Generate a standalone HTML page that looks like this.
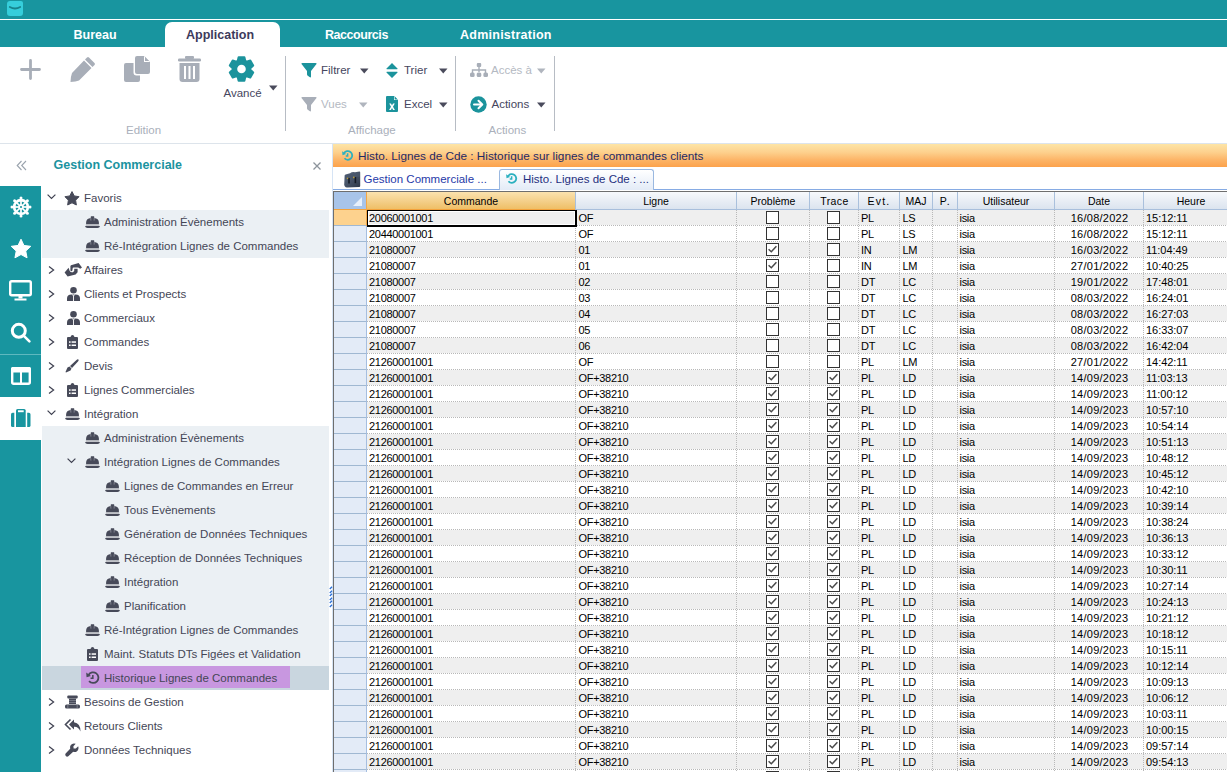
<!DOCTYPE html>
<html><head><meta charset="utf-8"><title>Histo</title>
<style>
html,body{margin:0;padding:0;}
body{width:1227px;height:772px;overflow:hidden;position:relative;background:#fff;font-family:"Liberation Sans",sans-serif;}
.t{position:absolute;white-space:nowrap;line-height:1;}
svg{overflow:visible}
</style></head><body>

<div style="position:absolute;left:0px;top:0px;width:1227px;height:47px;background:#18959f"></div>
<div style="position:absolute;left:0px;top:19px;width:1227px;height:1px;background:#ffffff"></div>
<div style="position:absolute;left:6.5px;top:0.5px;width:16px;height:15.5px;background:#36cedb;border-radius:3px 2px 3px 3px"></div>
<svg style="position:absolute;left:6.5px;top:0px" width="16" height="16" viewBox="0 0 16 16"><path d="M2.8 7 Q8 10 13.2 7" stroke="#17838c" stroke-width="1.8" fill="none" stroke-linecap="round"/></svg>
<div style="position:absolute;left:165px;top:22px;width:115px;height:25px;background:#fff;border-radius:7px 7px 0 0"></div>
<div class="t" style="left:73.5px;top:29.42px;font-size:12.5px;color:#ffffff;font-weight:bold;">Bureau</div>
<div class="t" style="left:186.0px;top:29.42px;font-size:12.5px;color:#3d3a5c;font-weight:bold;">Application</div>
<div class="t" style="left:325.0px;top:29.42px;font-size:12.5px;color:#ffffff;font-weight:bold;letter-spacing:-0.45px">Raccourcis</div>
<div class="t" style="left:460.0px;top:29.42px;font-size:12.5px;color:#ffffff;font-weight:bold;letter-spacing:0.25px">Administration</div>
<div style="position:absolute;left:0px;top:143px;width:1227px;height:1px;background:#dde4eb"></div>
<svg style="position:absolute;left:20px;top:59px" width="21" height="21" viewBox="0 0 21 21"><path d="M10.5 1.5V19.5M1.5 10.5H19.5" stroke="#a8aeb8" stroke-width="2.8" stroke-linecap="round"/></svg>
<svg style="position:absolute;left:70px;top:56px" width="26" height="26" viewBox="0 0 26 26"><path d="M19 1.5 L24.5 7 Q25.5 8 24.5 9 L22.5 11 L15 3.5 L17 1.5 Q18 0.5 19 1.5Z M14 4.5 L21.5 12 L9 24.5 Q6 25.8 0.5 26 Q0.8 20 2 17 Z" fill="#a8aeb8"/></svg>
<svg style="position:absolute;left:124px;top:56px" width="26" height="26" viewBox="0 0 26 26"><path d="M11 2 Q11 0 13 0 L20 0 L26 6 L26 16 Q26 18 24 18 L13 18 Q11 18 11 16Z" fill="#a8aeb8"/><path d="M20 0 L20 6 L26 6Z" fill="#fff"/><path d="M21 0.8 L25.2 5 L21 5Z" fill="#a8aeb8"/><path d="M2 7 L9.5 7 L9.5 16.5 Q9.5 19.5 12.5 19.5 L16 19.5 L16 24 Q16 26 14 26 L2 26 Q0 26 0 24 L0 9 Q0 7 2 7Z" fill="#a8aeb8"/></svg>
<svg style="position:absolute;left:178px;top:56px" width="23" height="26" viewBox="0 0 23 26"><rect x="0" y="2.5" width="23" height="3" rx="1.2" fill="#a8aeb8"/><rect x="7" y="0" width="9" height="3" rx="1" fill="#a8aeb8"/><path d="M1.5 7 L21.5 7 L21.5 23 Q21.5 26 18.5 26 L4.5 26 Q1.5 26 1.5 23Z" fill="#a8aeb8"/><rect x="6" y="10" width="2" height="13" fill="#fff"/><rect x="10.5" y="10" width="2" height="13" fill="#fff"/><rect x="15" y="10" width="2" height="13" fill="#fff"/></svg>
<svg style="position:absolute;left:229px;top:56px" width="26" height="26" viewBox="0 0 26 26"><path d="M8.71 4.95 L9.60 1.15 L15.40 1.15 L16.29 4.95 L17.58 5.69 L21.31 4.56 L24.21 9.59 L21.37 12.26 L21.37 13.74 L24.21 16.41 L21.31 21.44 L17.58 20.31 L16.29 21.05 L15.40 24.85 L9.60 24.85 L8.71 21.05 L7.42 20.31 L3.69 21.44 L0.79 16.41 L3.63 13.74 L3.63 12.26 L0.79 9.59 L3.69 4.56 L7.42 5.69Z" fill="#1b939c" stroke="#1b939c" stroke-width="2" stroke-linejoin="round"/><circle cx="12.5" cy="13" r="4.3" fill="#fff"/></svg>
<div class="t" style="left:223.5px;top:87.77px;font-size:11.5px;color:#46465e;font-weight:normal;">Avancé</div>
<svg style="position:absolute;left:269px;top:85px" width="9" height="6" viewBox="0 0 9 6"><path d="M0 0.5 L8.5 0.5 L4.25 5.5Z" fill="#4a4b5c"/></svg>
<div class="t" style="left:126.0px;top:125.27px;font-size:11.5px;color:#aab0bb;font-weight:normal;">Edition</div>
<div style="position:absolute;left:285px;top:56px;width:1px;height:75px;background:#b7bcc4"></div>
<div style="position:absolute;left:455px;top:56px;width:1px;height:75px;background:#b7bcc4"></div>
<div style="position:absolute;left:554px;top:56px;width:1px;height:75px;background:#b7bcc4"></div>
<svg style="position:absolute;left:301px;top:63px" width="16" height="15" viewBox="0 0 16 15"><path d="M0.5 1 Q0 0 1.5 0 L14.5 0 Q16 0 15.5 1 L10 8 L10 13.5 Q10 15 8.5 14 L6.5 12.5 Q6 12 6 11 L6 8Z" fill="#1b939c"/></svg>
<div class="t" style="left:321.0px;top:64.77px;font-size:11.5px;color:#46465e;font-weight:normal;">Filtrer</div>
<svg style="position:absolute;left:360px;top:68px" width="9" height="6" viewBox="0 0 9 6"><path d="M0 0.5 L8.5 0.5 L4.25 5.5Z" fill="#4a4b5c"/></svg>
<svg style="position:absolute;left:386px;top:63px" width="12" height="15" viewBox="0 0 12 15"><path d="M6 0 L11.5 5.5 Q12 6.2 11 6.2 L1 6.2 Q0 6.2 0.5 5.5Z M6 15 L11.5 9.5 Q12 8.8 11 8.8 L1 8.8 Q0 8.8 0.5 9.5Z" fill="#1b939c"/></svg>
<div class="t" style="left:404.0px;top:64.77px;font-size:11.5px;color:#46465e;font-weight:normal;">Trier</div>
<svg style="position:absolute;left:439px;top:68px" width="9" height="6" viewBox="0 0 9 6"><path d="M0 0.5 L8.5 0.5 L4.25 5.5Z" fill="#4a4b5c"/></svg>
<svg style="position:absolute;left:301px;top:97px" width="16" height="15" viewBox="0 0 16 15"><path d="M0.5 1 Q0 0 1.5 0 L14.5 0 Q16 0 15.5 1 L10 8 L10 13.5 Q10 15 8.5 14 L6.5 12.5 Q6 12 6 11 L6 8Z" fill="#a8aeb8"/></svg>
<div class="t" style="left:321.0px;top:98.77px;font-size:11.5px;color:#b4b9c2;font-weight:normal;">Vues</div>
<svg style="position:absolute;left:359px;top:102px" width="9" height="6" viewBox="0 0 9 6"><path d="M0 0.5 L8.5 0.5 L4.25 5.5Z" fill="#b0b5be"/></svg>
<svg style="position:absolute;left:386px;top:96px" width="12" height="16" viewBox="0 0 12 16"><path d="M1 0 L8 0 L12 4 L12 15 Q12 16 11 16 L1 16 Q0 16 0 15 L0 1 Q0 0 1 0Z" fill="#1b939c"/><path d="M8 0 L8 4 L12 4Z" fill="#fff"/><path d="M8.6 0.3 L11.7 3.4 L8.6 3.4Z" fill="#1b939c"/><path d="M3.2 7.5 L5 7.5 L6 9.6 L7 7.5 L8.8 7.5 L7 10.8 L8.9 14 L7.1 14 L6 11.9 L4.9 14 L3.1 14 L5 10.8Z" fill="#fff"/></svg>
<div class="t" style="left:404.0px;top:98.77px;font-size:11.5px;color:#46465e;font-weight:normal;">Excel</div>
<svg style="position:absolute;left:439px;top:102px" width="9" height="6" viewBox="0 0 9 6"><path d="M0 0.5 L8.5 0.5 L4.25 5.5Z" fill="#4a4b5c"/></svg>
<div class="t" style="left:348.0px;top:125.27px;font-size:11.5px;color:#aab0bb;font-weight:normal;">Affichage</div>
<svg style="position:absolute;left:470px;top:63px" width="18" height="14" viewBox="0 0 18 14"><rect x="6.8" y="0" width="4.4" height="4" rx="1" fill="#a8aeb8"/><path d="M9 4 V9 M2.5 10 V7 H15.5 V10" stroke="#a8aeb8" stroke-width="1.4" fill="none"/><rect x="0" y="9.5" width="4.6" height="4.5" rx="1.5" fill="#a8aeb8"/><rect x="6.7" y="9.5" width="4.6" height="4.5" rx="1.5" fill="#a8aeb8"/><rect x="13.4" y="9.5" width="4.6" height="4.5" rx="1.5" fill="#a8aeb8"/></svg>
<div class="t" style="left:491.0px;top:64.77px;font-size:11.5px;color:#b4b9c2;font-weight:normal;">Accès à</div>
<svg style="position:absolute;left:537px;top:68px" width="9" height="6" viewBox="0 0 9 6"><path d="M0 0.5 L8.5 0.5 L4.25 5.5Z" fill="#b0b5be"/></svg>
<svg style="position:absolute;left:470px;top:96px" width="17" height="17" viewBox="0 0 17 17"><circle cx="8.5" cy="8.5" r="8.2" fill="#1b939c"/><path d="M4 8.5 H12 M8.5 4.8 L12.3 8.5 L8.5 12.2" stroke="#fff" stroke-width="2" fill="none" stroke-linecap="round" stroke-linejoin="round"/></svg>
<div class="t" style="left:491.5px;top:98.77px;font-size:11.5px;color:#46465e;font-weight:normal;">Actions</div>
<svg style="position:absolute;left:537px;top:102px" width="9" height="6" viewBox="0 0 9 6"><path d="M0 0.5 L8.5 0.5 L4.25 5.5Z" fill="#4a4b5c"/></svg>
<div class="t" style="left:488.5px;top:125.27px;font-size:11.5px;color:#aab0bb;font-weight:normal;">Actions</div>
<svg style="position:absolute;left:16px;top:160px" width="11" height="11" viewBox="0 0 11 11"><path d="M5.5 1 L1.2 5.5 L5.5 10 M10 1 L5.7 5.5 L10 10" stroke="#9aa3ad" stroke-width="1.1" fill="none"/></svg>
<div class="t" style="left:53.5px;top:159.42px;font-size:12.5px;color:#1b939f;font-weight:bold;">Gestion Commerciale</div>
<svg style="position:absolute;left:313px;top:162px" width="8" height="8" viewBox="0 0 8 8"><path d="M0.5 0.5 L7.5 7.5 M7.5 0.5 L0.5 7.5" stroke="#8d949c" stroke-width="1.3"/></svg>
<div style="position:absolute;left:0px;top:186px;width:41px;height:586px;background:#18959f"></div>
<div style="position:absolute;left:0px;top:354px;width:41px;height:1px;background:#5fb8bf"></div>
<div style="position:absolute;left:0px;top:397px;width:41px;height:43px;background:#ffffff"></div>
<svg style="position:absolute;left:11px;top:197px" width="20" height="20" viewBox="0 0 20 20"><circle cx="10" cy="10" r="8.2" fill="#fff"/><circle cx="10" cy="10" r="5.5" fill="#18959f"/><line x1="10" y1="10" x2="17.00" y2="10.00" stroke="#fff" stroke-width="1.7"/><circle cx="19.00" cy="10.00" r="1.5" fill="#fff"/><line x1="10" y1="10" x2="14.95" y2="14.95" stroke="#fff" stroke-width="1.7"/><circle cx="16.36" cy="16.36" r="1.5" fill="#fff"/><line x1="10" y1="10" x2="10.00" y2="17.00" stroke="#fff" stroke-width="1.7"/><circle cx="10.00" cy="19.00" r="1.5" fill="#fff"/><line x1="10" y1="10" x2="5.05" y2="14.95" stroke="#fff" stroke-width="1.7"/><circle cx="3.64" cy="16.36" r="1.5" fill="#fff"/><line x1="10" y1="10" x2="3.00" y2="10.00" stroke="#fff" stroke-width="1.7"/><circle cx="1.00" cy="10.00" r="1.5" fill="#fff"/><line x1="10" y1="10" x2="5.05" y2="5.05" stroke="#fff" stroke-width="1.7"/><circle cx="3.64" cy="3.64" r="1.5" fill="#fff"/><line x1="10" y1="10" x2="10.00" y2="3.00" stroke="#fff" stroke-width="1.7"/><circle cx="10.00" cy="1.00" r="1.5" fill="#fff"/><line x1="10" y1="10" x2="14.95" y2="5.05" stroke="#fff" stroke-width="1.7"/><circle cx="16.36" cy="3.64" r="1.5" fill="#fff"/><circle cx="10" cy="10" r="2.7" fill="#fff"/><circle cx="10" cy="10" r="1.1" fill="#18959f"/></svg>
<svg style="position:absolute;left:10px;top:238px" width="22" height="21" viewBox="0 0 22 21"><path d="M11.00 1.20 L13.94 7.45 L20.80 8.32 L15.76 13.05 L17.05 19.83 L11.00 16.50 L4.95 19.83 L6.24 13.05 L1.20 8.32 L8.06 7.45Z" fill="#fff" stroke="#fff" stroke-width="1" stroke-linejoin="round"/></svg>
<svg style="position:absolute;left:9px;top:280px" width="23" height="21" viewBox="0 0 23 21"><rect x="1.2" y="1.2" width="20.6" height="14" rx="1.5" stroke="#fff" stroke-width="2.4" fill="none"/><rect x="9.5" y="15" width="4" height="3.5" fill="#fff"/><rect x="5.5" y="18.5" width="12" height="2" fill="#fff"/></svg>
<svg style="position:absolute;left:11px;top:323px" width="20" height="20" viewBox="0 0 20 20"><circle cx="7.8" cy="7.8" r="6.5" stroke="#fff" stroke-width="3" fill="none"/><path d="M12.6 12.6 L18.4 18.4" stroke="#fff" stroke-width="2.6" stroke-linecap="round"/></svg>
<svg style="position:absolute;left:11px;top:367px" width="20" height="18" viewBox="0 0 20 18"><rect x="1.2" y="1.2" width="17.6" height="15.6" rx="1.5" stroke="#fff" stroke-width="2.4" fill="none"/><rect x="0" y="0" width="20" height="5.6" rx="1.5" fill="#fff"/><rect x="9" y="2" width="2" height="15" fill="#fff"/></svg>
<svg style="position:absolute;left:11px;top:409px" width="20" height="19" viewBox="0 0 20 19"><path d="M5 1.6 Q5 0 6.6 0 L13.1 0 Q14.7 0 14.7 1.6 L14.7 18 L5 18Z" fill="#18959f"/><rect x="7" y="1.3" width="5.7" height="1.9" fill="#fff"/><path d="M3.3 3.8 L3.3 18 L1.6 18 Q0 18 0 16.4 L0 5.4 Q0 3.8 1.6 3.8Z" fill="#18959f"/><path d="M16.2 3.8 L16.2 18 L17.9 18 Q19.5 18 19.5 16.4 L19.5 5.4 Q19.5 3.8 17.9 3.8Z" fill="#18959f"/></svg>
<div style="position:absolute;left:42px;top:210px;width:287px;height:48px;background:#ebf0f4"></div>
<div style="position:absolute;left:42px;top:426px;width:287px;height:240px;background:#ebf0f4"></div>
<div style="position:absolute;left:42px;top:666px;width:287px;height:24px;background:#c9d6df"></div>
<div style="position:absolute;left:81px;top:666px;width:209px;height:22px;background:#c897e0"></div>
<svg style="position:absolute;left:47px;top:194.4px" width="9" height="6" viewBox="0 0 9 6"><path d="M0.6 0.6 L4.5 4.4 L8.4 0.6" stroke="#3e4050" stroke-width="1.2" fill="none"/></svg>
<svg style="position:absolute;left:64px;top:191px" width="16" height="15" viewBox="0 0 16 15"><path d="M8.00 0.60 L10.23 4.93 L15.04 5.71 L11.61 9.17 L12.35 13.99 L8.00 11.80 L3.65 13.99 L4.39 9.17 L0.96 5.71 L5.77 4.93Z" fill="#474a59" stroke="#474a59" stroke-width="1" stroke-linejoin="round"/></svg>
<div class="t" style="left:84.0px;top:193.27px;font-size:11.5px;color:#444656;font-weight:normal;">Favoris</div>
<svg style="position:absolute;left:84.5px;top:216px" width="15" height="12" viewBox="0 0 15 12"><path d="M1.1 8.4 L1.1 6.4 C1.1 3.6 3 2.2 5.7 1.9 L5.9 0.2 L9.1 0.2 L9.3 1.9 C12 2.2 13.9 3.6 13.9 6.4 L13.9 8.4Z" fill="#474a59"/><path d="M5.7 1.8 L5.9 4.6 M9.3 1.8 L9.1 4.6" stroke="#9a9ca6" stroke-width="0.7"/><rect x="0.8" y="8.3" width="13.4" height="1.8" fill="#c0c2c8"/><path d="M0 10.1 L15 10.1 Q14.6 12 12.5 12 L2.5 12 Q0.4 12 0 10.1Z" fill="#474a59"/></svg>
<div class="t" style="left:104.0px;top:217.27px;font-size:11.5px;color:#444656;font-weight:normal;">Administration Évènements</div>
<svg style="position:absolute;left:84.5px;top:240px" width="15" height="12" viewBox="0 0 15 12"><path d="M1.1 8.4 L1.1 6.4 C1.1 3.6 3 2.2 5.7 1.9 L5.9 0.2 L9.1 0.2 L9.3 1.9 C12 2.2 13.9 3.6 13.9 6.4 L13.9 8.4Z" fill="#474a59"/><path d="M5.7 1.8 L5.9 4.6 M9.3 1.8 L9.1 4.6" stroke="#9a9ca6" stroke-width="0.7"/><rect x="0.8" y="8.3" width="13.4" height="1.8" fill="#c0c2c8"/><path d="M0 10.1 L15 10.1 Q14.6 12 12.5 12 L2.5 12 Q0.4 12 0 10.1Z" fill="#474a59"/></svg>
<div class="t" style="left:104.0px;top:241.27px;font-size:11.5px;color:#444656;font-weight:normal;">Ré-Intégration Lignes de Commandes</div>
<svg style="position:absolute;left:48px;top:266px" width="7" height="8" viewBox="0 0 7 8"><path d="M1 0.6 L5.6 4 L1 7.4" stroke="#3e4050" stroke-width="1.2" fill="none"/></svg>
<svg style="position:absolute;left:60px;top:258px" width="24" height="22" viewBox="0 0 24 22"><path d="M11 7.2 L18.6 5 L22 9.6 L20.2 10.8 L18.2 9.6 L13.6 9.6 Q12.6 9.6 12.6 10.8 L12.4 12.6 Q11.2 13.8 10.4 12.4 L10.4 8Z" fill="#474a59"/><path d="M4.6 14.6 L8.6 9.8 L9.6 12.8 Q10.8 14.8 12.8 14.2 L14.2 13 L14.2 10.8 L17.6 10.8 L17.6 14.2 L15.6 16.6 L7.6 18.6Z" fill="#474a59"/></svg>
<div class="t" style="left:84.0px;top:265.27px;font-size:11.5px;color:#444656;font-weight:normal;">Affaires</div>
<svg style="position:absolute;left:48px;top:290px" width="7" height="8" viewBox="0 0 7 8"><path d="M1 0.6 L5.6 4 L1 7.4" stroke="#3e4050" stroke-width="1.2" fill="none"/></svg>
<svg style="position:absolute;left:66.5px;top:287px" width="13" height="14" viewBox="0 0 13 14"><circle cx="6.5" cy="3.3" r="3.3" fill="#474a59"/><path d="M0 14 L0 11.5 Q0 7.5 4.5 7.5 L8.5 7.5 Q13 7.5 13 11.5 L13 14Z" fill="#474a59"/><path d="M5.4 7.5 L6.5 9 L7.6 7.5 M6.5 9 L6.5 14" stroke="#fff" stroke-width="0.9" fill="none"/></svg>
<div class="t" style="left:84.0px;top:289.27px;font-size:11.5px;color:#444656;font-weight:normal;">Clients et Prospects</div>
<svg style="position:absolute;left:48px;top:314px" width="7" height="8" viewBox="0 0 7 8"><path d="M1 0.6 L5.6 4 L1 7.4" stroke="#3e4050" stroke-width="1.2" fill="none"/></svg>
<svg style="position:absolute;left:66.5px;top:311px" width="13" height="14" viewBox="0 0 13 14"><circle cx="6.5" cy="3.3" r="3.3" fill="#474a59"/><path d="M0 14 L0 11.5 Q0 7.5 4.5 7.5 L8.5 7.5 Q13 7.5 13 11.5 L13 14Z" fill="#474a59"/><path d="M5.4 7.5 L6.5 9 L7.6 7.5 M6.5 9 L6.5 14" stroke="#fff" stroke-width="0.9" fill="none"/></svg>
<div class="t" style="left:84.0px;top:313.27px;font-size:11.5px;color:#444656;font-weight:normal;">Commerciaux</div>
<svg style="position:absolute;left:48px;top:338px" width="7" height="8" viewBox="0 0 7 8"><path d="M1 0.6 L5.6 4 L1 7.4" stroke="#3e4050" stroke-width="1.2" fill="none"/></svg>
<svg style="position:absolute;left:67px;top:335px" width="11" height="14" viewBox="0 0 11 14"><path d="M1 2 L3.5 2 Q4 0 5.5 0 Q7 0 7.5 2 L10 2 Q11 2 11 3 L11 13 Q11 14 10 14 L1 14 Q0 14 0 13 L0 3 Q0 2 1 2Z" fill="#474a59"/><rect x="2" y="6.3" width="1.6" height="1.5" fill="#fff"/><rect x="4.6" y="6.3" width="4.4" height="1.5" fill="#fff"/><rect x="2" y="9.5" width="1.6" height="1.5" fill="#fff"/><rect x="4.6" y="9.5" width="4.4" height="1.5" fill="#fff"/></svg>
<div class="t" style="left:84.0px;top:337.27px;font-size:11.5px;color:#444656;font-weight:normal;">Commandes</div>
<svg style="position:absolute;left:48px;top:362px" width="7" height="8" viewBox="0 0 7 8"><path d="M1 0.6 L5.6 4 L1 7.4" stroke="#3e4050" stroke-width="1.2" fill="none"/></svg>
<svg style="position:absolute;left:65px;top:359px" width="14" height="14" viewBox="0 0 14 14"><path d="M13.5 0.5 Q14 1.5 13 2.5 L7 9 L5 7 L11.5 1 Q12.5 0 13.5 0.5Z" fill="#474a59"/><path d="M4.5 7.5 L6.5 9.5 L5.5 11.5 L1 13.5 L0.5 13 L2.5 8.5Z" fill="#474a59"/></svg>
<div class="t" style="left:84.0px;top:361.27px;font-size:11.5px;color:#444656;font-weight:normal;">Devis</div>
<svg style="position:absolute;left:48px;top:386px" width="7" height="8" viewBox="0 0 7 8"><path d="M1 0.6 L5.6 4 L1 7.4" stroke="#3e4050" stroke-width="1.2" fill="none"/></svg>
<svg style="position:absolute;left:67px;top:383px" width="11" height="14" viewBox="0 0 11 14"><path d="M1 2 L3.5 2 Q4 0 5.5 0 Q7 0 7.5 2 L10 2 Q11 2 11 3 L11 13 Q11 14 10 14 L1 14 Q0 14 0 13 L0 3 Q0 2 1 2Z" fill="#474a59"/><rect x="2" y="6.3" width="1.6" height="1.5" fill="#fff"/><rect x="4.6" y="6.3" width="4.4" height="1.5" fill="#fff"/><rect x="2" y="9.5" width="1.6" height="1.5" fill="#fff"/><rect x="4.6" y="9.5" width="4.4" height="1.5" fill="#fff"/></svg>
<div class="t" style="left:84.0px;top:385.27px;font-size:11.5px;color:#444656;font-weight:normal;">Lignes Commerciales</div>
<svg style="position:absolute;left:47px;top:410.4px" width="9" height="6" viewBox="0 0 9 6"><path d="M0.6 0.6 L4.5 4.4 L8.4 0.6" stroke="#3e4050" stroke-width="1.2" fill="none"/></svg>
<svg style="position:absolute;left:64.5px;top:408px" width="15" height="12" viewBox="0 0 15 12"><path d="M1.1 8.4 L1.1 6.4 C1.1 3.6 3 2.2 5.7 1.9 L5.9 0.2 L9.1 0.2 L9.3 1.9 C12 2.2 13.9 3.6 13.9 6.4 L13.9 8.4Z" fill="#474a59"/><path d="M5.7 1.8 L5.9 4.6 M9.3 1.8 L9.1 4.6" stroke="#9a9ca6" stroke-width="0.7"/><rect x="0.8" y="8.3" width="13.4" height="1.8" fill="#c0c2c8"/><path d="M0 10.1 L15 10.1 Q14.6 12 12.5 12 L2.5 12 Q0.4 12 0 10.1Z" fill="#474a59"/></svg>
<div class="t" style="left:84.0px;top:409.27px;font-size:11.5px;color:#444656;font-weight:normal;">Intégration</div>
<svg style="position:absolute;left:84.5px;top:432px" width="15" height="12" viewBox="0 0 15 12"><path d="M1.1 8.4 L1.1 6.4 C1.1 3.6 3 2.2 5.7 1.9 L5.9 0.2 L9.1 0.2 L9.3 1.9 C12 2.2 13.9 3.6 13.9 6.4 L13.9 8.4Z" fill="#474a59"/><path d="M5.7 1.8 L5.9 4.6 M9.3 1.8 L9.1 4.6" stroke="#9a9ca6" stroke-width="0.7"/><rect x="0.8" y="8.3" width="13.4" height="1.8" fill="#c0c2c8"/><path d="M0 10.1 L15 10.1 Q14.6 12 12.5 12 L2.5 12 Q0.4 12 0 10.1Z" fill="#474a59"/></svg>
<div class="t" style="left:104.0px;top:433.27px;font-size:11.5px;color:#444656;font-weight:normal;">Administration Évènements</div>
<svg style="position:absolute;left:67px;top:458.4px" width="9" height="6" viewBox="0 0 9 6"><path d="M0.6 0.6 L4.5 4.4 L8.4 0.6" stroke="#3e4050" stroke-width="1.2" fill="none"/></svg>
<svg style="position:absolute;left:84.5px;top:456px" width="15" height="12" viewBox="0 0 15 12"><path d="M1.1 8.4 L1.1 6.4 C1.1 3.6 3 2.2 5.7 1.9 L5.9 0.2 L9.1 0.2 L9.3 1.9 C12 2.2 13.9 3.6 13.9 6.4 L13.9 8.4Z" fill="#474a59"/><path d="M5.7 1.8 L5.9 4.6 M9.3 1.8 L9.1 4.6" stroke="#9a9ca6" stroke-width="0.7"/><rect x="0.8" y="8.3" width="13.4" height="1.8" fill="#c0c2c8"/><path d="M0 10.1 L15 10.1 Q14.6 12 12.5 12 L2.5 12 Q0.4 12 0 10.1Z" fill="#474a59"/></svg>
<div class="t" style="left:104.0px;top:457.27px;font-size:11.5px;color:#444656;font-weight:normal;">Intégration Lignes de Commandes</div>
<svg style="position:absolute;left:104.5px;top:480px" width="15" height="12" viewBox="0 0 15 12"><path d="M1.1 8.4 L1.1 6.4 C1.1 3.6 3 2.2 5.7 1.9 L5.9 0.2 L9.1 0.2 L9.3 1.9 C12 2.2 13.9 3.6 13.9 6.4 L13.9 8.4Z" fill="#474a59"/><path d="M5.7 1.8 L5.9 4.6 M9.3 1.8 L9.1 4.6" stroke="#9a9ca6" stroke-width="0.7"/><rect x="0.8" y="8.3" width="13.4" height="1.8" fill="#c0c2c8"/><path d="M0 10.1 L15 10.1 Q14.6 12 12.5 12 L2.5 12 Q0.4 12 0 10.1Z" fill="#474a59"/></svg>
<div class="t" style="left:124.0px;top:481.27px;font-size:11.5px;color:#444656;font-weight:normal;">Lignes de Commandes en Erreur</div>
<svg style="position:absolute;left:104.5px;top:504px" width="15" height="12" viewBox="0 0 15 12"><path d="M1.1 8.4 L1.1 6.4 C1.1 3.6 3 2.2 5.7 1.9 L5.9 0.2 L9.1 0.2 L9.3 1.9 C12 2.2 13.9 3.6 13.9 6.4 L13.9 8.4Z" fill="#474a59"/><path d="M5.7 1.8 L5.9 4.6 M9.3 1.8 L9.1 4.6" stroke="#9a9ca6" stroke-width="0.7"/><rect x="0.8" y="8.3" width="13.4" height="1.8" fill="#c0c2c8"/><path d="M0 10.1 L15 10.1 Q14.6 12 12.5 12 L2.5 12 Q0.4 12 0 10.1Z" fill="#474a59"/></svg>
<div class="t" style="left:124.0px;top:505.27px;font-size:11.5px;color:#444656;font-weight:normal;">Tous Evènements</div>
<svg style="position:absolute;left:104.5px;top:528px" width="15" height="12" viewBox="0 0 15 12"><path d="M1.1 8.4 L1.1 6.4 C1.1 3.6 3 2.2 5.7 1.9 L5.9 0.2 L9.1 0.2 L9.3 1.9 C12 2.2 13.9 3.6 13.9 6.4 L13.9 8.4Z" fill="#474a59"/><path d="M5.7 1.8 L5.9 4.6 M9.3 1.8 L9.1 4.6" stroke="#9a9ca6" stroke-width="0.7"/><rect x="0.8" y="8.3" width="13.4" height="1.8" fill="#c0c2c8"/><path d="M0 10.1 L15 10.1 Q14.6 12 12.5 12 L2.5 12 Q0.4 12 0 10.1Z" fill="#474a59"/></svg>
<div class="t" style="left:124.0px;top:529.27px;font-size:11.5px;color:#444656;font-weight:normal;">Génération de Données Techniques</div>
<svg style="position:absolute;left:104.5px;top:552px" width="15" height="12" viewBox="0 0 15 12"><path d="M1.1 8.4 L1.1 6.4 C1.1 3.6 3 2.2 5.7 1.9 L5.9 0.2 L9.1 0.2 L9.3 1.9 C12 2.2 13.9 3.6 13.9 6.4 L13.9 8.4Z" fill="#474a59"/><path d="M5.7 1.8 L5.9 4.6 M9.3 1.8 L9.1 4.6" stroke="#9a9ca6" stroke-width="0.7"/><rect x="0.8" y="8.3" width="13.4" height="1.8" fill="#c0c2c8"/><path d="M0 10.1 L15 10.1 Q14.6 12 12.5 12 L2.5 12 Q0.4 12 0 10.1Z" fill="#474a59"/></svg>
<div class="t" style="left:124.0px;top:553.27px;font-size:11.5px;color:#444656;font-weight:normal;">Réception de Données Techniques</div>
<svg style="position:absolute;left:104.5px;top:576px" width="15" height="12" viewBox="0 0 15 12"><path d="M1.1 8.4 L1.1 6.4 C1.1 3.6 3 2.2 5.7 1.9 L5.9 0.2 L9.1 0.2 L9.3 1.9 C12 2.2 13.9 3.6 13.9 6.4 L13.9 8.4Z" fill="#474a59"/><path d="M5.7 1.8 L5.9 4.6 M9.3 1.8 L9.1 4.6" stroke="#9a9ca6" stroke-width="0.7"/><rect x="0.8" y="8.3" width="13.4" height="1.8" fill="#c0c2c8"/><path d="M0 10.1 L15 10.1 Q14.6 12 12.5 12 L2.5 12 Q0.4 12 0 10.1Z" fill="#474a59"/></svg>
<div class="t" style="left:124.0px;top:577.27px;font-size:11.5px;color:#444656;font-weight:normal;">Intégration</div>
<svg style="position:absolute;left:104.5px;top:600px" width="15" height="12" viewBox="0 0 15 12"><path d="M1.1 8.4 L1.1 6.4 C1.1 3.6 3 2.2 5.7 1.9 L5.9 0.2 L9.1 0.2 L9.3 1.9 C12 2.2 13.9 3.6 13.9 6.4 L13.9 8.4Z" fill="#474a59"/><path d="M5.7 1.8 L5.9 4.6 M9.3 1.8 L9.1 4.6" stroke="#9a9ca6" stroke-width="0.7"/><rect x="0.8" y="8.3" width="13.4" height="1.8" fill="#c0c2c8"/><path d="M0 10.1 L15 10.1 Q14.6 12 12.5 12 L2.5 12 Q0.4 12 0 10.1Z" fill="#474a59"/></svg>
<div class="t" style="left:124.0px;top:601.27px;font-size:11.5px;color:#444656;font-weight:normal;">Planification</div>
<svg style="position:absolute;left:84.5px;top:624px" width="15" height="12" viewBox="0 0 15 12"><path d="M1.1 8.4 L1.1 6.4 C1.1 3.6 3 2.2 5.7 1.9 L5.9 0.2 L9.1 0.2 L9.3 1.9 C12 2.2 13.9 3.6 13.9 6.4 L13.9 8.4Z" fill="#474a59"/><path d="M5.7 1.8 L5.9 4.6 M9.3 1.8 L9.1 4.6" stroke="#9a9ca6" stroke-width="0.7"/><rect x="0.8" y="8.3" width="13.4" height="1.8" fill="#c0c2c8"/><path d="M0 10.1 L15 10.1 Q14.6 12 12.5 12 L2.5 12 Q0.4 12 0 10.1Z" fill="#474a59"/></svg>
<div class="t" style="left:104.0px;top:625.27px;font-size:11.5px;color:#444656;font-weight:normal;">Ré-Intégration Lignes de Commandes</div>
<svg style="position:absolute;left:87px;top:647px" width="11" height="14" viewBox="0 0 11 14"><path d="M1 2 L3.5 2 Q4 0 5.5 0 Q7 0 7.5 2 L10 2 Q11 2 11 3 L11 13 Q11 14 10 14 L1 14 Q0 14 0 13 L0 3 Q0 2 1 2Z" fill="#474a59"/><rect x="2" y="6.3" width="1.6" height="1.5" fill="#fff"/><rect x="4.6" y="6.3" width="4.4" height="1.5" fill="#fff"/><rect x="2" y="9.5" width="1.6" height="1.5" fill="#fff"/><rect x="4.6" y="9.5" width="4.4" height="1.5" fill="#fff"/></svg>
<div class="t" style="left:104.0px;top:649.27px;font-size:11.5px;color:#444656;font-weight:normal;">Maint. Statuts DTs Figées et Validation</div>
<svg style="position:absolute;left:86px;top:671px" width="15" height="14" viewBox="0 0 15 14"><g transform="scale(0.95)"><path d="M2.65 4.20 A5.6 5.6 0 1 1 3.21 10.60" stroke="#474a59" stroke-width="1.9" fill="none"/><path d="M0.2 1.6 L0.6 6.6 L5.2 5.2Z" fill="#474a59"/><path d="M7.2 4.3 V7.6 H4.8" stroke="#474a59" stroke-width="1.615" fill="none"/></g></svg>
<div class="t" style="left:104.0px;top:673.27px;font-size:11.5px;color:#444656;font-weight:normal;">Historique Lignes de Commandes</div>
<svg style="position:absolute;left:48px;top:698px" width="7" height="8" viewBox="0 0 7 8"><path d="M1 0.6 L5.6 4 L1 7.4" stroke="#3e4050" stroke-width="1.2" fill="none"/></svg>
<svg style="position:absolute;left:65px;top:695px" width="15" height="14" viewBox="0 0 15 14"><rect x="2.3" y="0.6" width="10.4" height="3" rx="1" fill="#474a59"/><rect x="4" y="3.6" width="7" height="5.4" fill="#474a59"/><rect x="4" y="5" width="7" height="0.8" fill="#7d808c"/><rect x="4" y="7" width="7" height="0.8" fill="#7d808c"/><rect x="0" y="9.6" width="15" height="4" rx="1.6" fill="#474a59"/><rect x="2.6" y="9.6" width="0.6" height="4" fill="#9da0aa"/><rect x="11.8" y="9.6" width="0.6" height="4" fill="#9da0aa"/></svg>
<div class="t" style="left:84.0px;top:697.27px;font-size:11.5px;color:#444656;font-weight:normal;">Besoins de Gestion</div>
<svg style="position:absolute;left:48px;top:722px" width="7" height="8" viewBox="0 0 7 8"><path d="M1 0.6 L5.6 4 L1 7.4" stroke="#3e4050" stroke-width="1.2" fill="none"/></svg>
<svg style="position:absolute;left:65px;top:719px" width="16" height="13" viewBox="0 0 16 13"><path d="M5.5 0.5 L0.5 5.5 L5.5 10.5" stroke="#474a59" stroke-width="1.6" fill="none"/><path d="M9 0.5 L4 5.5 L9 10.5 L9 7.8 Q13.5 7.5 15.5 12.5 Q15.5 4 9 3.2Z" fill="#474a59"/></svg>
<div class="t" style="left:84.0px;top:721.27px;font-size:11.5px;color:#444656;font-weight:normal;">Retours Clients</div>
<svg style="position:absolute;left:48px;top:746px" width="7" height="8" viewBox="0 0 7 8"><path d="M1 0.6 L5.6 4 L1 7.4" stroke="#3e4050" stroke-width="1.2" fill="none"/></svg>
<svg style="position:absolute;left:65px;top:743px" width="14" height="14" viewBox="0 0 14 14"><path d="M13.2 3.3 L10.8 5.6 L8.6 5.4 L8.4 3.2 L10.7 0.8 Q7.5 -0.2 5.8 2 Q4.6 3.6 5.2 5.8 L0.6 10.6 Q-0.3 11.8 0.8 13.1 Q2 14.2 3.3 13.3 L8.2 8.8 Q10.4 9.5 12 8.2 Q14.2 6.5 13.2 3.3Z" fill="#474a59"/></svg>
<div class="t" style="left:84.0px;top:745.27px;font-size:11.5px;color:#444656;font-weight:normal;">Données Techniques</div>
<div style="position:absolute;left:329px;top:144px;width:4px;height:628px;background:#ffffff"></div>
<div style="position:absolute;left:332px;top:144px;width:1px;height:628px;background:#d6e4f5"></div>
<svg style="position:absolute;left:329px;top:586.0px" width="4" height="4" viewBox="0 0 4 4"><path d="M0.8 3 L3 0.8" stroke="#2a6fd6" stroke-width="1.3"/></svg>
<svg style="position:absolute;left:329px;top:589.5px" width="4" height="4" viewBox="0 0 4 4"><path d="M0.8 3 L3 0.8" stroke="#2a6fd6" stroke-width="1.3"/></svg>
<svg style="position:absolute;left:329px;top:593.0px" width="4" height="4" viewBox="0 0 4 4"><path d="M0.8 3 L3 0.8" stroke="#2a6fd6" stroke-width="1.3"/></svg>
<svg style="position:absolute;left:329px;top:596.5px" width="4" height="4" viewBox="0 0 4 4"><path d="M0.8 3 L3 0.8" stroke="#2a6fd6" stroke-width="1.3"/></svg>
<svg style="position:absolute;left:329px;top:600.0px" width="4" height="4" viewBox="0 0 4 4"><path d="M0.8 3 L3 0.8" stroke="#2a6fd6" stroke-width="1.3"/></svg>
<svg style="position:absolute;left:329px;top:603.5px" width="4" height="4" viewBox="0 0 4 4"><path d="M0.8 3 L3 0.8" stroke="#2a6fd6" stroke-width="1.3"/></svg>
<div style="position:absolute;left:333px;top:144px;width:894px;height:23px;background:linear-gradient(#fde5a6,#fdd18e 35%,#fcb466 70%,#fca24c)"></div>
<svg style="position:absolute;left:341.5px;top:150px" width="15" height="14" viewBox="0 0 15 14"><g transform="scale(0.78)"><path d="M2.65 4.20 A5.6 5.6 0 1 1 3.21 10.60" stroke="#2bb0bf" stroke-width="2.3" fill="none"/><path d="M0.2 1.6 L0.6 6.6 L5.2 5.2Z" fill="#2bb0bf"/><path d="M7.2 4.3 V7.6 H4.8" stroke="#2bb0bf" stroke-width="1.9549999999999998" fill="none"/></g></svg>
<div class="t" style="left:358.0px;top:150.05px;font-size:11.75px;color:#1e2a66;font-weight:normal;">Histo. Lignes de Cde : Historique sur lignes de commandes clients</div>
<div style="position:absolute;left:333px;top:167px;width:894px;height:22px;background:#ffffff"></div>
<div style="position:absolute;left:333px;top:189px;width:894px;height:1px;background:#86abe4"></div>
<div style="position:absolute;left:499px;top:169px;width:155px;height:21px;background:linear-gradient(#ffffff,#e3ebf7);border:1px solid #9ab8e0;border-bottom:none;border-radius:3px 3px 0 0;box-sizing:border-box"></div>
<svg style="position:absolute;left:344px;top:171px" width="17" height="17" viewBox="0 0 17 17"><defs><linearGradient id="bc" x1="0" y1="0" x2="1" y2="1"><stop offset="0" stop-color="#5d6b82"/><stop offset="1" stop-color="#2e3848"/></linearGradient></defs><path d="M1.5 3.6 L6 2.3 Q8 0.6 11 1.2 L15.4 0.6 Q16.3 0.6 16.2 1.6 L16.2 15 Q16.2 16 15.2 16.1 L3 16.6 Q1.6 16.6 0.9 15.6 L0.2 14 L0.6 4.6 Q0.7 3.9 1.5 3.6Z" fill="url(#bc)"/><path d="M1 4.2 L15.8 1.4 L16 5.4 L1 8.2Z" fill="#49566b" opacity="0.8"/><rect x="4.2" y="7" width="1.6" height="5.5" fill="#151b25"/><rect x="10.6" y="6" width="1.6" height="6.2" fill="#151b25"/><rect x="2.8" y="6.6" width="1.4" height="1.5" fill="#b99a3a"/><rect x="9" y="5.6" width="1.5" height="1.6" fill="#b99a3a"/></svg>
<div class="t" style="left:363.5px;top:174.27px;font-size:11.5px;color:#1f3aa8;font-weight:normal;">Gestion Commerciale ...</div>
<svg style="position:absolute;left:505.5px;top:173px" width="15" height="14" viewBox="0 0 15 14"><g transform="scale(0.78)"><path d="M2.65 4.20 A5.6 5.6 0 1 1 3.21 10.60" stroke="#2bb0bf" stroke-width="2.3" fill="none"/><path d="M0.2 1.6 L0.6 6.6 L5.2 5.2Z" fill="#2bb0bf"/><path d="M7.2 4.3 V7.6 H4.8" stroke="#2bb0bf" stroke-width="1.9549999999999998" fill="none"/></g></svg>
<div class="t" style="left:523.0px;top:174.27px;font-size:11.5px;color:#1f3080;font-weight:normal;">Histo. Lignes de Cde : ...</div>
<div style="position:absolute;left:333px;top:190px;width:894px;height:1px;background:#ffffff"></div>
<div style="position:absolute;left:333px;top:191px;width:894px;height:1px;background:#6e6e6e"></div>
<div style="position:absolute;left:333px;top:191px;width:1px;height:581px;background:#6e6e6e"></div>
<div style="position:absolute;left:334px;top:192px;width:893px;height:17px;background:linear-gradient(#f7f9fc,#e9eef5 50%,#dbe4ef)"></div>
<div style="position:absolute;left:334px;top:209px;width:893px;height:1px;background:#a8bfdc"></div>
<div style="position:absolute;left:334px;top:192px;width:32px;height:17px;background:#a8c4e9"></div>
<svg style="position:absolute;left:352px;top:196px" width="11" height="11" viewBox="0 0 11 11"><path d="M10 1 L10 10 L1 10Z" fill="#e8f0fb"/></svg>
<div style="position:absolute;left:367px;top:192px;width:208px;height:17px;background:linear-gradient(#fbe2ae,#f3cd85 60%,#efbf66)"></div>
<div style="position:absolute;left:334px;top:209px;width:241px;height:1px;background:#f3a23c"></div>
<div style="position:absolute;left:366px;top:192px;width:1px;height:34px;background:#f4a747"></div>
<div style="position:absolute;left:575px;top:192px;width:1px;height:17px;background:#a9c0dc"></div>
<div style="position:absolute;left:736px;top:192px;width:1px;height:17px;background:#a9c0dc"></div>
<div style="position:absolute;left:809px;top:192px;width:1px;height:17px;background:#a9c0dc"></div>
<div style="position:absolute;left:858px;top:192px;width:1px;height:17px;background:#a9c0dc"></div>
<div style="position:absolute;left:899px;top:192px;width:1px;height:17px;background:#a9c0dc"></div>
<div style="position:absolute;left:932px;top:192px;width:1px;height:17px;background:#a9c0dc"></div>
<div style="position:absolute;left:957px;top:192px;width:1px;height:17px;background:#a9c0dc"></div>
<div style="position:absolute;left:1054px;top:192px;width:1px;height:17px;background:#a9c0dc"></div>
<div style="position:absolute;left:1143px;top:192px;width:1px;height:17px;background:#a9c0dc"></div>
<div class="t" style="left:171.0px;width:600px;text-align:center;top:196.11px;font-size:10.5px;color:#000;font-weight:normal;">Commande</div>
<div class="t" style="left:356.0px;width:600px;text-align:center;top:196.11px;font-size:10.5px;color:#000;font-weight:normal;">Ligne</div>
<div class="t" style="left:473.0px;width:600px;text-align:center;top:196.11px;font-size:10.5px;color:#000;font-weight:normal;">Problème</div>
<div class="t" style="left:534.5px;width:600px;text-align:center;top:196.11px;font-size:10.5px;color:#000;font-weight:normal;letter-spacing:0.4px">Trace</div>
<div class="t" style="left:579.0px;width:600px;text-align:center;top:196.11px;font-size:10.5px;color:#000;font-weight:normal;letter-spacing:1.2px">Evt.</div>
<div class="t" style="left:616.0px;width:600px;text-align:center;top:196.11px;font-size:10.5px;color:#000;font-weight:normal;">MAJ</div>
<div class="t" style="left:645.5px;width:600px;text-align:center;top:196.11px;font-size:10.5px;color:#000;font-weight:normal;letter-spacing:1.5px">P.</div>
<div class="t" style="left:706.0px;width:600px;text-align:center;top:196.11px;font-size:10.5px;color:#000;font-weight:normal;">Utilisateur</div>
<div class="t" style="left:799.0px;width:600px;text-align:center;top:196.11px;font-size:10.5px;color:#000;font-weight:normal;">Date</div>
<div class="t" style="left:891.0px;width:600px;text-align:center;top:196.11px;font-size:10.5px;color:#000;font-weight:normal;">Heure</div>
<div style="position:absolute;left:367px;top:210px;width:860px;height:15px;background:#efefef"></div>
<div style="position:absolute;left:367px;top:242px;width:860px;height:15px;background:#efefef"></div>
<div style="position:absolute;left:367px;top:274px;width:860px;height:15px;background:#efefef"></div>
<div style="position:absolute;left:367px;top:306px;width:860px;height:15px;background:#efefef"></div>
<div style="position:absolute;left:367px;top:338px;width:860px;height:15px;background:#efefef"></div>
<div style="position:absolute;left:367px;top:370px;width:860px;height:15px;background:#efefef"></div>
<div style="position:absolute;left:367px;top:402px;width:860px;height:15px;background:#efefef"></div>
<div style="position:absolute;left:367px;top:434px;width:860px;height:15px;background:#efefef"></div>
<div style="position:absolute;left:367px;top:466px;width:860px;height:15px;background:#efefef"></div>
<div style="position:absolute;left:367px;top:498px;width:860px;height:15px;background:#efefef"></div>
<div style="position:absolute;left:367px;top:530px;width:860px;height:15px;background:#efefef"></div>
<div style="position:absolute;left:367px;top:562px;width:860px;height:15px;background:#efefef"></div>
<div style="position:absolute;left:367px;top:594px;width:860px;height:15px;background:#efefef"></div>
<div style="position:absolute;left:367px;top:626px;width:860px;height:15px;background:#efefef"></div>
<div style="position:absolute;left:367px;top:658px;width:860px;height:15px;background:#efefef"></div>
<div style="position:absolute;left:367px;top:690px;width:860px;height:15px;background:#efefef"></div>
<div style="position:absolute;left:367px;top:722px;width:860px;height:15px;background:#efefef"></div>
<div style="position:absolute;left:367px;top:754px;width:860px;height:15px;background:#efefef"></div>
<div style="position:absolute;left:334px;top:210px;width:32px;height:562px;background:#e3ebf7"></div>
<div style="position:absolute;left:334px;top:210px;width:32px;height:15px;background:#fdd28e"></div>
<div style="position:absolute;left:366px;top:226px;width:1px;height:546px;background:#a5bee0"></div>
<div style="position:absolute;left:334px;top:225px;width:32px;height:1px;background:#a0b8d2"></div>
<div style="position:absolute;left:334px;top:241px;width:32px;height:1px;background:#a0b8d2"></div>
<div style="position:absolute;left:334px;top:257px;width:32px;height:1px;background:#a0b8d2"></div>
<div style="position:absolute;left:334px;top:273px;width:32px;height:1px;background:#a0b8d2"></div>
<div style="position:absolute;left:334px;top:289px;width:32px;height:1px;background:#a0b8d2"></div>
<div style="position:absolute;left:334px;top:305px;width:32px;height:1px;background:#a0b8d2"></div>
<div style="position:absolute;left:334px;top:321px;width:32px;height:1px;background:#a0b8d2"></div>
<div style="position:absolute;left:334px;top:337px;width:32px;height:1px;background:#a0b8d2"></div>
<div style="position:absolute;left:334px;top:353px;width:32px;height:1px;background:#a0b8d2"></div>
<div style="position:absolute;left:334px;top:369px;width:32px;height:1px;background:#a0b8d2"></div>
<div style="position:absolute;left:334px;top:385px;width:32px;height:1px;background:#a0b8d2"></div>
<div style="position:absolute;left:334px;top:401px;width:32px;height:1px;background:#a0b8d2"></div>
<div style="position:absolute;left:334px;top:417px;width:32px;height:1px;background:#a0b8d2"></div>
<div style="position:absolute;left:334px;top:433px;width:32px;height:1px;background:#a0b8d2"></div>
<div style="position:absolute;left:334px;top:449px;width:32px;height:1px;background:#a0b8d2"></div>
<div style="position:absolute;left:334px;top:465px;width:32px;height:1px;background:#a0b8d2"></div>
<div style="position:absolute;left:334px;top:481px;width:32px;height:1px;background:#a0b8d2"></div>
<div style="position:absolute;left:334px;top:497px;width:32px;height:1px;background:#a0b8d2"></div>
<div style="position:absolute;left:334px;top:513px;width:32px;height:1px;background:#a0b8d2"></div>
<div style="position:absolute;left:334px;top:529px;width:32px;height:1px;background:#a0b8d2"></div>
<div style="position:absolute;left:334px;top:545px;width:32px;height:1px;background:#a0b8d2"></div>
<div style="position:absolute;left:334px;top:561px;width:32px;height:1px;background:#a0b8d2"></div>
<div style="position:absolute;left:334px;top:577px;width:32px;height:1px;background:#a0b8d2"></div>
<div style="position:absolute;left:334px;top:593px;width:32px;height:1px;background:#a0b8d2"></div>
<div style="position:absolute;left:334px;top:609px;width:32px;height:1px;background:#a0b8d2"></div>
<div style="position:absolute;left:334px;top:625px;width:32px;height:1px;background:#a0b8d2"></div>
<div style="position:absolute;left:334px;top:641px;width:32px;height:1px;background:#a0b8d2"></div>
<div style="position:absolute;left:334px;top:657px;width:32px;height:1px;background:#a0b8d2"></div>
<div style="position:absolute;left:334px;top:673px;width:32px;height:1px;background:#a0b8d2"></div>
<div style="position:absolute;left:334px;top:689px;width:32px;height:1px;background:#a0b8d2"></div>
<div style="position:absolute;left:334px;top:705px;width:32px;height:1px;background:#a0b8d2"></div>
<div style="position:absolute;left:334px;top:721px;width:32px;height:1px;background:#a0b8d2"></div>
<div style="position:absolute;left:334px;top:737px;width:32px;height:1px;background:#a0b8d2"></div>
<div style="position:absolute;left:334px;top:753px;width:32px;height:1px;background:#a0b8d2"></div>
<div style="position:absolute;left:334px;top:769px;width:32px;height:1px;background:#a0b8d2"></div>
<div style="position:absolute;left:334px;top:785px;width:32px;height:1px;background:#a0b8d2"></div>
<div style="position:absolute;left:367px;top:225px;width:860px;height:1px;background:repeating-linear-gradient(90deg,#b8b8b8 0 1px,transparent 1px 2px)"></div>
<div style="position:absolute;left:367px;top:241px;width:860px;height:1px;background:repeating-linear-gradient(90deg,#b8b8b8 0 1px,transparent 1px 2px)"></div>
<div style="position:absolute;left:367px;top:257px;width:860px;height:1px;background:repeating-linear-gradient(90deg,#b8b8b8 0 1px,transparent 1px 2px)"></div>
<div style="position:absolute;left:367px;top:273px;width:860px;height:1px;background:repeating-linear-gradient(90deg,#b8b8b8 0 1px,transparent 1px 2px)"></div>
<div style="position:absolute;left:367px;top:289px;width:860px;height:1px;background:repeating-linear-gradient(90deg,#b8b8b8 0 1px,transparent 1px 2px)"></div>
<div style="position:absolute;left:367px;top:305px;width:860px;height:1px;background:repeating-linear-gradient(90deg,#b8b8b8 0 1px,transparent 1px 2px)"></div>
<div style="position:absolute;left:367px;top:321px;width:860px;height:1px;background:repeating-linear-gradient(90deg,#b8b8b8 0 1px,transparent 1px 2px)"></div>
<div style="position:absolute;left:367px;top:337px;width:860px;height:1px;background:repeating-linear-gradient(90deg,#b8b8b8 0 1px,transparent 1px 2px)"></div>
<div style="position:absolute;left:367px;top:353px;width:860px;height:1px;background:repeating-linear-gradient(90deg,#b8b8b8 0 1px,transparent 1px 2px)"></div>
<div style="position:absolute;left:367px;top:369px;width:860px;height:1px;background:repeating-linear-gradient(90deg,#b8b8b8 0 1px,transparent 1px 2px)"></div>
<div style="position:absolute;left:367px;top:385px;width:860px;height:1px;background:repeating-linear-gradient(90deg,#b8b8b8 0 1px,transparent 1px 2px)"></div>
<div style="position:absolute;left:367px;top:401px;width:860px;height:1px;background:repeating-linear-gradient(90deg,#b8b8b8 0 1px,transparent 1px 2px)"></div>
<div style="position:absolute;left:367px;top:417px;width:860px;height:1px;background:repeating-linear-gradient(90deg,#b8b8b8 0 1px,transparent 1px 2px)"></div>
<div style="position:absolute;left:367px;top:433px;width:860px;height:1px;background:repeating-linear-gradient(90deg,#b8b8b8 0 1px,transparent 1px 2px)"></div>
<div style="position:absolute;left:367px;top:449px;width:860px;height:1px;background:repeating-linear-gradient(90deg,#b8b8b8 0 1px,transparent 1px 2px)"></div>
<div style="position:absolute;left:367px;top:465px;width:860px;height:1px;background:repeating-linear-gradient(90deg,#b8b8b8 0 1px,transparent 1px 2px)"></div>
<div style="position:absolute;left:367px;top:481px;width:860px;height:1px;background:repeating-linear-gradient(90deg,#b8b8b8 0 1px,transparent 1px 2px)"></div>
<div style="position:absolute;left:367px;top:497px;width:860px;height:1px;background:repeating-linear-gradient(90deg,#b8b8b8 0 1px,transparent 1px 2px)"></div>
<div style="position:absolute;left:367px;top:513px;width:860px;height:1px;background:repeating-linear-gradient(90deg,#b8b8b8 0 1px,transparent 1px 2px)"></div>
<div style="position:absolute;left:367px;top:529px;width:860px;height:1px;background:repeating-linear-gradient(90deg,#b8b8b8 0 1px,transparent 1px 2px)"></div>
<div style="position:absolute;left:367px;top:545px;width:860px;height:1px;background:repeating-linear-gradient(90deg,#b8b8b8 0 1px,transparent 1px 2px)"></div>
<div style="position:absolute;left:367px;top:561px;width:860px;height:1px;background:repeating-linear-gradient(90deg,#b8b8b8 0 1px,transparent 1px 2px)"></div>
<div style="position:absolute;left:367px;top:577px;width:860px;height:1px;background:repeating-linear-gradient(90deg,#b8b8b8 0 1px,transparent 1px 2px)"></div>
<div style="position:absolute;left:367px;top:593px;width:860px;height:1px;background:repeating-linear-gradient(90deg,#b8b8b8 0 1px,transparent 1px 2px)"></div>
<div style="position:absolute;left:367px;top:609px;width:860px;height:1px;background:repeating-linear-gradient(90deg,#b8b8b8 0 1px,transparent 1px 2px)"></div>
<div style="position:absolute;left:367px;top:625px;width:860px;height:1px;background:repeating-linear-gradient(90deg,#b8b8b8 0 1px,transparent 1px 2px)"></div>
<div style="position:absolute;left:367px;top:641px;width:860px;height:1px;background:repeating-linear-gradient(90deg,#b8b8b8 0 1px,transparent 1px 2px)"></div>
<div style="position:absolute;left:367px;top:657px;width:860px;height:1px;background:repeating-linear-gradient(90deg,#b8b8b8 0 1px,transparent 1px 2px)"></div>
<div style="position:absolute;left:367px;top:673px;width:860px;height:1px;background:repeating-linear-gradient(90deg,#b8b8b8 0 1px,transparent 1px 2px)"></div>
<div style="position:absolute;left:367px;top:689px;width:860px;height:1px;background:repeating-linear-gradient(90deg,#b8b8b8 0 1px,transparent 1px 2px)"></div>
<div style="position:absolute;left:367px;top:705px;width:860px;height:1px;background:repeating-linear-gradient(90deg,#b8b8b8 0 1px,transparent 1px 2px)"></div>
<div style="position:absolute;left:367px;top:721px;width:860px;height:1px;background:repeating-linear-gradient(90deg,#b8b8b8 0 1px,transparent 1px 2px)"></div>
<div style="position:absolute;left:367px;top:737px;width:860px;height:1px;background:repeating-linear-gradient(90deg,#b8b8b8 0 1px,transparent 1px 2px)"></div>
<div style="position:absolute;left:367px;top:753px;width:860px;height:1px;background:repeating-linear-gradient(90deg,#b8b8b8 0 1px,transparent 1px 2px)"></div>
<div style="position:absolute;left:367px;top:769px;width:860px;height:1px;background:repeating-linear-gradient(90deg,#b8b8b8 0 1px,transparent 1px 2px)"></div>
<div style="position:absolute;left:367px;top:785px;width:860px;height:1px;background:repeating-linear-gradient(90deg,#b8b8b8 0 1px,transparent 1px 2px)"></div>
<div style="position:absolute;left:575px;top:210px;width:1px;height:562px;background:repeating-linear-gradient(180deg,#b8b8b8 0 1px,transparent 1px 2px)"></div>
<div style="position:absolute;left:736px;top:210px;width:1px;height:562px;background:repeating-linear-gradient(180deg,#b8b8b8 0 1px,transparent 1px 2px)"></div>
<div style="position:absolute;left:809px;top:210px;width:1px;height:562px;background:repeating-linear-gradient(180deg,#b8b8b8 0 1px,transparent 1px 2px)"></div>
<div style="position:absolute;left:858px;top:210px;width:1px;height:562px;background:repeating-linear-gradient(180deg,#b8b8b8 0 1px,transparent 1px 2px)"></div>
<div style="position:absolute;left:899px;top:210px;width:1px;height:562px;background:repeating-linear-gradient(180deg,#b8b8b8 0 1px,transparent 1px 2px)"></div>
<div style="position:absolute;left:932px;top:210px;width:1px;height:562px;background:repeating-linear-gradient(180deg,#b8b8b8 0 1px,transparent 1px 2px)"></div>
<div style="position:absolute;left:957px;top:210px;width:1px;height:562px;background:repeating-linear-gradient(180deg,#b8b8b8 0 1px,transparent 1px 2px)"></div>
<div style="position:absolute;left:1054px;top:210px;width:1px;height:562px;background:repeating-linear-gradient(180deg,#b8b8b8 0 1px,transparent 1px 2px)"></div>
<div style="position:absolute;left:1143px;top:210px;width:1px;height:562px;background:repeating-linear-gradient(180deg,#b8b8b8 0 1px,transparent 1px 2px)"></div>
<div style="position:absolute;left:367px;top:210px;width:210px;height:17px;box-sizing:border-box;border:1px solid #000;border-width:1px 2px 2px 1px;box-shadow:inset 0 0 0 1px #fff;background:#efefef"></div>
<div class="t" style="left:369.0px;top:212.69px;font-size:11px;color:#000;font-weight:normal;letter-spacing:-0.3px">20060001001</div>
<div class="t" style="left:578.5px;top:212.69px;font-size:11px;color:#000;font-weight:normal;letter-spacing:-0.3px">OF</div>
<svg style="position:absolute;left:766px;top:211px" width="13" height="13" viewBox="0 0 13 13"><rect x="0.5" y="0.5" width="12" height="12" fill="#fff" stroke="#333" stroke-width="1"/></svg>
<svg style="position:absolute;left:827px;top:211px" width="13" height="13" viewBox="0 0 13 13"><rect x="0.5" y="0.5" width="12" height="12" fill="#fff" stroke="#333" stroke-width="1"/></svg>
<div class="t" style="left:861.0px;top:212.69px;font-size:11px;color:#000;font-weight:normal;letter-spacing:-0.3px">PL</div>
<div class="t" style="left:902.5px;top:212.69px;font-size:11px;color:#000;font-weight:normal;letter-spacing:-0.3px">LS</div>
<div class="t" style="left:959.5px;top:212.69px;font-size:11px;color:#000;font-weight:normal;letter-spacing:-0.3px">isia</div>
<div class="t" style="left:799.5px;width:600px;text-align:center;top:212.69px;font-size:11px;color:#000;font-weight:normal;letter-spacing:0.25px">16/08/2022</div>
<div class="t" style="left:1146.0px;top:212.69px;font-size:11px;color:#000;font-weight:normal;letter-spacing:-0.05px">15:12:11</div>
<div class="t" style="left:369.0px;top:228.69px;font-size:11px;color:#000;font-weight:normal;letter-spacing:-0.3px">20440001001</div>
<div class="t" style="left:578.5px;top:228.69px;font-size:11px;color:#000;font-weight:normal;letter-spacing:-0.3px">OF</div>
<svg style="position:absolute;left:766px;top:227px" width="13" height="13" viewBox="0 0 13 13"><rect x="0.5" y="0.5" width="12" height="12" fill="#fff" stroke="#333" stroke-width="1"/></svg>
<svg style="position:absolute;left:827px;top:227px" width="13" height="13" viewBox="0 0 13 13"><rect x="0.5" y="0.5" width="12" height="12" fill="#fff" stroke="#333" stroke-width="1"/></svg>
<div class="t" style="left:861.0px;top:228.69px;font-size:11px;color:#000;font-weight:normal;letter-spacing:-0.3px">PL</div>
<div class="t" style="left:902.5px;top:228.69px;font-size:11px;color:#000;font-weight:normal;letter-spacing:-0.3px">LS</div>
<div class="t" style="left:959.5px;top:228.69px;font-size:11px;color:#000;font-weight:normal;letter-spacing:-0.3px">isia</div>
<div class="t" style="left:799.5px;width:600px;text-align:center;top:228.69px;font-size:11px;color:#000;font-weight:normal;letter-spacing:0.25px">16/08/2022</div>
<div class="t" style="left:1146.0px;top:228.69px;font-size:11px;color:#000;font-weight:normal;letter-spacing:-0.05px">15:12:11</div>
<div class="t" style="left:369.0px;top:244.69px;font-size:11px;color:#000;font-weight:normal;letter-spacing:-0.3px">21080007</div>
<div class="t" style="left:578.5px;top:244.69px;font-size:11px;color:#000;font-weight:normal;letter-spacing:-0.3px">01</div>
<svg style="position:absolute;left:766px;top:243px" width="13" height="13" viewBox="0 0 13 13"><rect x="0.5" y="0.5" width="12" height="12" fill="#fff" stroke="#333" stroke-width="1"/><path d="M2.6 6.3 L5.3 8.8 L10.4 3.3" stroke="#4a4a4a" stroke-width="1.5" fill="none"/></svg>
<svg style="position:absolute;left:827px;top:243px" width="13" height="13" viewBox="0 0 13 13"><rect x="0.5" y="0.5" width="12" height="12" fill="#fff" stroke="#333" stroke-width="1"/></svg>
<div class="t" style="left:861.0px;top:244.69px;font-size:11px;color:#000;font-weight:normal;letter-spacing:-0.3px">IN</div>
<div class="t" style="left:902.5px;top:244.69px;font-size:11px;color:#000;font-weight:normal;letter-spacing:-0.3px">LM</div>
<div class="t" style="left:959.5px;top:244.69px;font-size:11px;color:#000;font-weight:normal;letter-spacing:-0.3px">isia</div>
<div class="t" style="left:799.5px;width:600px;text-align:center;top:244.69px;font-size:11px;color:#000;font-weight:normal;letter-spacing:0.25px">16/03/2022</div>
<div class="t" style="left:1146.0px;top:244.69px;font-size:11px;color:#000;font-weight:normal;letter-spacing:-0.05px">11:04:49</div>
<div class="t" style="left:369.0px;top:260.69px;font-size:11px;color:#000;font-weight:normal;letter-spacing:-0.3px">21080007</div>
<div class="t" style="left:578.5px;top:260.69px;font-size:11px;color:#000;font-weight:normal;letter-spacing:-0.3px">01</div>
<svg style="position:absolute;left:766px;top:259px" width="13" height="13" viewBox="0 0 13 13"><rect x="0.5" y="0.5" width="12" height="12" fill="#fff" stroke="#333" stroke-width="1"/><path d="M2.6 6.3 L5.3 8.8 L10.4 3.3" stroke="#4a4a4a" stroke-width="1.5" fill="none"/></svg>
<svg style="position:absolute;left:827px;top:259px" width="13" height="13" viewBox="0 0 13 13"><rect x="0.5" y="0.5" width="12" height="12" fill="#fff" stroke="#333" stroke-width="1"/></svg>
<div class="t" style="left:861.0px;top:260.69px;font-size:11px;color:#000;font-weight:normal;letter-spacing:-0.3px">IN</div>
<div class="t" style="left:902.5px;top:260.69px;font-size:11px;color:#000;font-weight:normal;letter-spacing:-0.3px">LM</div>
<div class="t" style="left:959.5px;top:260.69px;font-size:11px;color:#000;font-weight:normal;letter-spacing:-0.3px">isia</div>
<div class="t" style="left:799.5px;width:600px;text-align:center;top:260.69px;font-size:11px;color:#000;font-weight:normal;letter-spacing:0.25px">27/01/2022</div>
<div class="t" style="left:1146.0px;top:260.69px;font-size:11px;color:#000;font-weight:normal;letter-spacing:-0.05px">10:40:25</div>
<div class="t" style="left:369.0px;top:276.69px;font-size:11px;color:#000;font-weight:normal;letter-spacing:-0.3px">21080007</div>
<div class="t" style="left:578.5px;top:276.69px;font-size:11px;color:#000;font-weight:normal;letter-spacing:-0.3px">02</div>
<svg style="position:absolute;left:766px;top:275px" width="13" height="13" viewBox="0 0 13 13"><rect x="0.5" y="0.5" width="12" height="12" fill="#fff" stroke="#333" stroke-width="1"/></svg>
<svg style="position:absolute;left:827px;top:275px" width="13" height="13" viewBox="0 0 13 13"><rect x="0.5" y="0.5" width="12" height="12" fill="#fff" stroke="#333" stroke-width="1"/></svg>
<div class="t" style="left:861.0px;top:276.69px;font-size:11px;color:#000;font-weight:normal;letter-spacing:-0.3px">DT</div>
<div class="t" style="left:902.5px;top:276.69px;font-size:11px;color:#000;font-weight:normal;letter-spacing:-0.3px">LC</div>
<div class="t" style="left:959.5px;top:276.69px;font-size:11px;color:#000;font-weight:normal;letter-spacing:-0.3px">isia</div>
<div class="t" style="left:799.5px;width:600px;text-align:center;top:276.69px;font-size:11px;color:#000;font-weight:normal;letter-spacing:0.25px">19/01/2022</div>
<div class="t" style="left:1146.0px;top:276.69px;font-size:11px;color:#000;font-weight:normal;letter-spacing:-0.05px">17:48:01</div>
<div class="t" style="left:369.0px;top:292.69px;font-size:11px;color:#000;font-weight:normal;letter-spacing:-0.3px">21080007</div>
<div class="t" style="left:578.5px;top:292.69px;font-size:11px;color:#000;font-weight:normal;letter-spacing:-0.3px">03</div>
<svg style="position:absolute;left:766px;top:291px" width="13" height="13" viewBox="0 0 13 13"><rect x="0.5" y="0.5" width="12" height="12" fill="#fff" stroke="#333" stroke-width="1"/></svg>
<svg style="position:absolute;left:827px;top:291px" width="13" height="13" viewBox="0 0 13 13"><rect x="0.5" y="0.5" width="12" height="12" fill="#fff" stroke="#333" stroke-width="1"/></svg>
<div class="t" style="left:861.0px;top:292.69px;font-size:11px;color:#000;font-weight:normal;letter-spacing:-0.3px">DT</div>
<div class="t" style="left:902.5px;top:292.69px;font-size:11px;color:#000;font-weight:normal;letter-spacing:-0.3px">LC</div>
<div class="t" style="left:959.5px;top:292.69px;font-size:11px;color:#000;font-weight:normal;letter-spacing:-0.3px">isia</div>
<div class="t" style="left:799.5px;width:600px;text-align:center;top:292.69px;font-size:11px;color:#000;font-weight:normal;letter-spacing:0.25px">08/03/2022</div>
<div class="t" style="left:1146.0px;top:292.69px;font-size:11px;color:#000;font-weight:normal;letter-spacing:-0.05px">16:24:01</div>
<div class="t" style="left:369.0px;top:308.69px;font-size:11px;color:#000;font-weight:normal;letter-spacing:-0.3px">21080007</div>
<div class="t" style="left:578.5px;top:308.69px;font-size:11px;color:#000;font-weight:normal;letter-spacing:-0.3px">04</div>
<svg style="position:absolute;left:766px;top:307px" width="13" height="13" viewBox="0 0 13 13"><rect x="0.5" y="0.5" width="12" height="12" fill="#fff" stroke="#333" stroke-width="1"/></svg>
<svg style="position:absolute;left:827px;top:307px" width="13" height="13" viewBox="0 0 13 13"><rect x="0.5" y="0.5" width="12" height="12" fill="#fff" stroke="#333" stroke-width="1"/></svg>
<div class="t" style="left:861.0px;top:308.69px;font-size:11px;color:#000;font-weight:normal;letter-spacing:-0.3px">DT</div>
<div class="t" style="left:902.5px;top:308.69px;font-size:11px;color:#000;font-weight:normal;letter-spacing:-0.3px">LC</div>
<div class="t" style="left:959.5px;top:308.69px;font-size:11px;color:#000;font-weight:normal;letter-spacing:-0.3px">isia</div>
<div class="t" style="left:799.5px;width:600px;text-align:center;top:308.69px;font-size:11px;color:#000;font-weight:normal;letter-spacing:0.25px">08/03/2022</div>
<div class="t" style="left:1146.0px;top:308.69px;font-size:11px;color:#000;font-weight:normal;letter-spacing:-0.05px">16:27:03</div>
<div class="t" style="left:369.0px;top:324.69px;font-size:11px;color:#000;font-weight:normal;letter-spacing:-0.3px">21080007</div>
<div class="t" style="left:578.5px;top:324.69px;font-size:11px;color:#000;font-weight:normal;letter-spacing:-0.3px">05</div>
<svg style="position:absolute;left:766px;top:323px" width="13" height="13" viewBox="0 0 13 13"><rect x="0.5" y="0.5" width="12" height="12" fill="#fff" stroke="#333" stroke-width="1"/></svg>
<svg style="position:absolute;left:827px;top:323px" width="13" height="13" viewBox="0 0 13 13"><rect x="0.5" y="0.5" width="12" height="12" fill="#fff" stroke="#333" stroke-width="1"/></svg>
<div class="t" style="left:861.0px;top:324.69px;font-size:11px;color:#000;font-weight:normal;letter-spacing:-0.3px">DT</div>
<div class="t" style="left:902.5px;top:324.69px;font-size:11px;color:#000;font-weight:normal;letter-spacing:-0.3px">LC</div>
<div class="t" style="left:959.5px;top:324.69px;font-size:11px;color:#000;font-weight:normal;letter-spacing:-0.3px">isia</div>
<div class="t" style="left:799.5px;width:600px;text-align:center;top:324.69px;font-size:11px;color:#000;font-weight:normal;letter-spacing:0.25px">08/03/2022</div>
<div class="t" style="left:1146.0px;top:324.69px;font-size:11px;color:#000;font-weight:normal;letter-spacing:-0.05px">16:33:07</div>
<div class="t" style="left:369.0px;top:340.69px;font-size:11px;color:#000;font-weight:normal;letter-spacing:-0.3px">21080007</div>
<div class="t" style="left:578.5px;top:340.69px;font-size:11px;color:#000;font-weight:normal;letter-spacing:-0.3px">06</div>
<svg style="position:absolute;left:766px;top:339px" width="13" height="13" viewBox="0 0 13 13"><rect x="0.5" y="0.5" width="12" height="12" fill="#fff" stroke="#333" stroke-width="1"/></svg>
<svg style="position:absolute;left:827px;top:339px" width="13" height="13" viewBox="0 0 13 13"><rect x="0.5" y="0.5" width="12" height="12" fill="#fff" stroke="#333" stroke-width="1"/></svg>
<div class="t" style="left:861.0px;top:340.69px;font-size:11px;color:#000;font-weight:normal;letter-spacing:-0.3px">DT</div>
<div class="t" style="left:902.5px;top:340.69px;font-size:11px;color:#000;font-weight:normal;letter-spacing:-0.3px">LC</div>
<div class="t" style="left:959.5px;top:340.69px;font-size:11px;color:#000;font-weight:normal;letter-spacing:-0.3px">isia</div>
<div class="t" style="left:799.5px;width:600px;text-align:center;top:340.69px;font-size:11px;color:#000;font-weight:normal;letter-spacing:0.25px">08/03/2022</div>
<div class="t" style="left:1146.0px;top:340.69px;font-size:11px;color:#000;font-weight:normal;letter-spacing:-0.05px">16:42:04</div>
<div class="t" style="left:369.0px;top:356.69px;font-size:11px;color:#000;font-weight:normal;letter-spacing:-0.3px">21260001001</div>
<div class="t" style="left:578.5px;top:356.69px;font-size:11px;color:#000;font-weight:normal;letter-spacing:-0.3px">OF</div>
<svg style="position:absolute;left:766px;top:355px" width="13" height="13" viewBox="0 0 13 13"><rect x="0.5" y="0.5" width="12" height="12" fill="#fff" stroke="#333" stroke-width="1"/></svg>
<svg style="position:absolute;left:827px;top:355px" width="13" height="13" viewBox="0 0 13 13"><rect x="0.5" y="0.5" width="12" height="12" fill="#fff" stroke="#333" stroke-width="1"/></svg>
<div class="t" style="left:861.0px;top:356.69px;font-size:11px;color:#000;font-weight:normal;letter-spacing:-0.3px">PL</div>
<div class="t" style="left:902.5px;top:356.69px;font-size:11px;color:#000;font-weight:normal;letter-spacing:-0.3px">LM</div>
<div class="t" style="left:959.5px;top:356.69px;font-size:11px;color:#000;font-weight:normal;letter-spacing:-0.3px">isia</div>
<div class="t" style="left:799.5px;width:600px;text-align:center;top:356.69px;font-size:11px;color:#000;font-weight:normal;letter-spacing:0.25px">27/01/2022</div>
<div class="t" style="left:1146.0px;top:356.69px;font-size:11px;color:#000;font-weight:normal;letter-spacing:-0.05px">14:42:11</div>
<div class="t" style="left:369.0px;top:372.69px;font-size:11px;color:#000;font-weight:normal;letter-spacing:-0.3px">21260001001</div>
<div class="t" style="left:578.5px;top:372.69px;font-size:11px;color:#000;font-weight:normal;letter-spacing:-0.3px">OF+38210</div>
<svg style="position:absolute;left:766px;top:371px" width="13" height="13" viewBox="0 0 13 13"><rect x="0.5" y="0.5" width="12" height="12" fill="#fff" stroke="#333" stroke-width="1"/><path d="M2.6 6.3 L5.3 8.8 L10.4 3.3" stroke="#4a4a4a" stroke-width="1.5" fill="none"/></svg>
<svg style="position:absolute;left:827px;top:371px" width="13" height="13" viewBox="0 0 13 13"><rect x="0.5" y="0.5" width="12" height="12" fill="#fff" stroke="#333" stroke-width="1"/><path d="M2.6 6.3 L5.3 8.8 L10.4 3.3" stroke="#4a4a4a" stroke-width="1.5" fill="none"/></svg>
<div class="t" style="left:861.0px;top:372.69px;font-size:11px;color:#000;font-weight:normal;letter-spacing:-0.3px">PL</div>
<div class="t" style="left:902.5px;top:372.69px;font-size:11px;color:#000;font-weight:normal;letter-spacing:-0.3px">LD</div>
<div class="t" style="left:959.5px;top:372.69px;font-size:11px;color:#000;font-weight:normal;letter-spacing:-0.3px">isia</div>
<div class="t" style="left:799.5px;width:600px;text-align:center;top:372.69px;font-size:11px;color:#000;font-weight:normal;letter-spacing:0.25px">14/09/2023</div>
<div class="t" style="left:1146.0px;top:372.69px;font-size:11px;color:#000;font-weight:normal;letter-spacing:-0.05px">11:03:13</div>
<div class="t" style="left:369.0px;top:388.69px;font-size:11px;color:#000;font-weight:normal;letter-spacing:-0.3px">21260001001</div>
<div class="t" style="left:578.5px;top:388.69px;font-size:11px;color:#000;font-weight:normal;letter-spacing:-0.3px">OF+38210</div>
<svg style="position:absolute;left:766px;top:387px" width="13" height="13" viewBox="0 0 13 13"><rect x="0.5" y="0.5" width="12" height="12" fill="#fff" stroke="#333" stroke-width="1"/><path d="M2.6 6.3 L5.3 8.8 L10.4 3.3" stroke="#4a4a4a" stroke-width="1.5" fill="none"/></svg>
<svg style="position:absolute;left:827px;top:387px" width="13" height="13" viewBox="0 0 13 13"><rect x="0.5" y="0.5" width="12" height="12" fill="#fff" stroke="#333" stroke-width="1"/><path d="M2.6 6.3 L5.3 8.8 L10.4 3.3" stroke="#4a4a4a" stroke-width="1.5" fill="none"/></svg>
<div class="t" style="left:861.0px;top:388.69px;font-size:11px;color:#000;font-weight:normal;letter-spacing:-0.3px">PL</div>
<div class="t" style="left:902.5px;top:388.69px;font-size:11px;color:#000;font-weight:normal;letter-spacing:-0.3px">LD</div>
<div class="t" style="left:959.5px;top:388.69px;font-size:11px;color:#000;font-weight:normal;letter-spacing:-0.3px">isia</div>
<div class="t" style="left:799.5px;width:600px;text-align:center;top:388.69px;font-size:11px;color:#000;font-weight:normal;letter-spacing:0.25px">14/09/2023</div>
<div class="t" style="left:1146.0px;top:388.69px;font-size:11px;color:#000;font-weight:normal;letter-spacing:-0.05px">11:00:12</div>
<div class="t" style="left:369.0px;top:404.69px;font-size:11px;color:#000;font-weight:normal;letter-spacing:-0.3px">21260001001</div>
<div class="t" style="left:578.5px;top:404.69px;font-size:11px;color:#000;font-weight:normal;letter-spacing:-0.3px">OF+38210</div>
<svg style="position:absolute;left:766px;top:403px" width="13" height="13" viewBox="0 0 13 13"><rect x="0.5" y="0.5" width="12" height="12" fill="#fff" stroke="#333" stroke-width="1"/><path d="M2.6 6.3 L5.3 8.8 L10.4 3.3" stroke="#4a4a4a" stroke-width="1.5" fill="none"/></svg>
<svg style="position:absolute;left:827px;top:403px" width="13" height="13" viewBox="0 0 13 13"><rect x="0.5" y="0.5" width="12" height="12" fill="#fff" stroke="#333" stroke-width="1"/><path d="M2.6 6.3 L5.3 8.8 L10.4 3.3" stroke="#4a4a4a" stroke-width="1.5" fill="none"/></svg>
<div class="t" style="left:861.0px;top:404.69px;font-size:11px;color:#000;font-weight:normal;letter-spacing:-0.3px">PL</div>
<div class="t" style="left:902.5px;top:404.69px;font-size:11px;color:#000;font-weight:normal;letter-spacing:-0.3px">LD</div>
<div class="t" style="left:959.5px;top:404.69px;font-size:11px;color:#000;font-weight:normal;letter-spacing:-0.3px">isia</div>
<div class="t" style="left:799.5px;width:600px;text-align:center;top:404.69px;font-size:11px;color:#000;font-weight:normal;letter-spacing:0.25px">14/09/2023</div>
<div class="t" style="left:1146.0px;top:404.69px;font-size:11px;color:#000;font-weight:normal;letter-spacing:-0.05px">10:57:10</div>
<div class="t" style="left:369.0px;top:420.69px;font-size:11px;color:#000;font-weight:normal;letter-spacing:-0.3px">21260001001</div>
<div class="t" style="left:578.5px;top:420.69px;font-size:11px;color:#000;font-weight:normal;letter-spacing:-0.3px">OF+38210</div>
<svg style="position:absolute;left:766px;top:419px" width="13" height="13" viewBox="0 0 13 13"><rect x="0.5" y="0.5" width="12" height="12" fill="#fff" stroke="#333" stroke-width="1"/><path d="M2.6 6.3 L5.3 8.8 L10.4 3.3" stroke="#4a4a4a" stroke-width="1.5" fill="none"/></svg>
<svg style="position:absolute;left:827px;top:419px" width="13" height="13" viewBox="0 0 13 13"><rect x="0.5" y="0.5" width="12" height="12" fill="#fff" stroke="#333" stroke-width="1"/><path d="M2.6 6.3 L5.3 8.8 L10.4 3.3" stroke="#4a4a4a" stroke-width="1.5" fill="none"/></svg>
<div class="t" style="left:861.0px;top:420.69px;font-size:11px;color:#000;font-weight:normal;letter-spacing:-0.3px">PL</div>
<div class="t" style="left:902.5px;top:420.69px;font-size:11px;color:#000;font-weight:normal;letter-spacing:-0.3px">LD</div>
<div class="t" style="left:959.5px;top:420.69px;font-size:11px;color:#000;font-weight:normal;letter-spacing:-0.3px">isia</div>
<div class="t" style="left:799.5px;width:600px;text-align:center;top:420.69px;font-size:11px;color:#000;font-weight:normal;letter-spacing:0.25px">14/09/2023</div>
<div class="t" style="left:1146.0px;top:420.69px;font-size:11px;color:#000;font-weight:normal;letter-spacing:-0.05px">10:54:14</div>
<div class="t" style="left:369.0px;top:436.69px;font-size:11px;color:#000;font-weight:normal;letter-spacing:-0.3px">21260001001</div>
<div class="t" style="left:578.5px;top:436.69px;font-size:11px;color:#000;font-weight:normal;letter-spacing:-0.3px">OF+38210</div>
<svg style="position:absolute;left:766px;top:435px" width="13" height="13" viewBox="0 0 13 13"><rect x="0.5" y="0.5" width="12" height="12" fill="#fff" stroke="#333" stroke-width="1"/><path d="M2.6 6.3 L5.3 8.8 L10.4 3.3" stroke="#4a4a4a" stroke-width="1.5" fill="none"/></svg>
<svg style="position:absolute;left:827px;top:435px" width="13" height="13" viewBox="0 0 13 13"><rect x="0.5" y="0.5" width="12" height="12" fill="#fff" stroke="#333" stroke-width="1"/><path d="M2.6 6.3 L5.3 8.8 L10.4 3.3" stroke="#4a4a4a" stroke-width="1.5" fill="none"/></svg>
<div class="t" style="left:861.0px;top:436.69px;font-size:11px;color:#000;font-weight:normal;letter-spacing:-0.3px">PL</div>
<div class="t" style="left:902.5px;top:436.69px;font-size:11px;color:#000;font-weight:normal;letter-spacing:-0.3px">LD</div>
<div class="t" style="left:959.5px;top:436.69px;font-size:11px;color:#000;font-weight:normal;letter-spacing:-0.3px">isia</div>
<div class="t" style="left:799.5px;width:600px;text-align:center;top:436.69px;font-size:11px;color:#000;font-weight:normal;letter-spacing:0.25px">14/09/2023</div>
<div class="t" style="left:1146.0px;top:436.69px;font-size:11px;color:#000;font-weight:normal;letter-spacing:-0.05px">10:51:13</div>
<div class="t" style="left:369.0px;top:452.69px;font-size:11px;color:#000;font-weight:normal;letter-spacing:-0.3px">21260001001</div>
<div class="t" style="left:578.5px;top:452.69px;font-size:11px;color:#000;font-weight:normal;letter-spacing:-0.3px">OF+38210</div>
<svg style="position:absolute;left:766px;top:451px" width="13" height="13" viewBox="0 0 13 13"><rect x="0.5" y="0.5" width="12" height="12" fill="#fff" stroke="#333" stroke-width="1"/><path d="M2.6 6.3 L5.3 8.8 L10.4 3.3" stroke="#4a4a4a" stroke-width="1.5" fill="none"/></svg>
<svg style="position:absolute;left:827px;top:451px" width="13" height="13" viewBox="0 0 13 13"><rect x="0.5" y="0.5" width="12" height="12" fill="#fff" stroke="#333" stroke-width="1"/><path d="M2.6 6.3 L5.3 8.8 L10.4 3.3" stroke="#4a4a4a" stroke-width="1.5" fill="none"/></svg>
<div class="t" style="left:861.0px;top:452.69px;font-size:11px;color:#000;font-weight:normal;letter-spacing:-0.3px">PL</div>
<div class="t" style="left:902.5px;top:452.69px;font-size:11px;color:#000;font-weight:normal;letter-spacing:-0.3px">LD</div>
<div class="t" style="left:959.5px;top:452.69px;font-size:11px;color:#000;font-weight:normal;letter-spacing:-0.3px">isia</div>
<div class="t" style="left:799.5px;width:600px;text-align:center;top:452.69px;font-size:11px;color:#000;font-weight:normal;letter-spacing:0.25px">14/09/2023</div>
<div class="t" style="left:1146.0px;top:452.69px;font-size:11px;color:#000;font-weight:normal;letter-spacing:-0.05px">10:48:12</div>
<div class="t" style="left:369.0px;top:468.69px;font-size:11px;color:#000;font-weight:normal;letter-spacing:-0.3px">21260001001</div>
<div class="t" style="left:578.5px;top:468.69px;font-size:11px;color:#000;font-weight:normal;letter-spacing:-0.3px">OF+38210</div>
<svg style="position:absolute;left:766px;top:467px" width="13" height="13" viewBox="0 0 13 13"><rect x="0.5" y="0.5" width="12" height="12" fill="#fff" stroke="#333" stroke-width="1"/><path d="M2.6 6.3 L5.3 8.8 L10.4 3.3" stroke="#4a4a4a" stroke-width="1.5" fill="none"/></svg>
<svg style="position:absolute;left:827px;top:467px" width="13" height="13" viewBox="0 0 13 13"><rect x="0.5" y="0.5" width="12" height="12" fill="#fff" stroke="#333" stroke-width="1"/><path d="M2.6 6.3 L5.3 8.8 L10.4 3.3" stroke="#4a4a4a" stroke-width="1.5" fill="none"/></svg>
<div class="t" style="left:861.0px;top:468.69px;font-size:11px;color:#000;font-weight:normal;letter-spacing:-0.3px">PL</div>
<div class="t" style="left:902.5px;top:468.69px;font-size:11px;color:#000;font-weight:normal;letter-spacing:-0.3px">LD</div>
<div class="t" style="left:959.5px;top:468.69px;font-size:11px;color:#000;font-weight:normal;letter-spacing:-0.3px">isia</div>
<div class="t" style="left:799.5px;width:600px;text-align:center;top:468.69px;font-size:11px;color:#000;font-weight:normal;letter-spacing:0.25px">14/09/2023</div>
<div class="t" style="left:1146.0px;top:468.69px;font-size:11px;color:#000;font-weight:normal;letter-spacing:-0.05px">10:45:12</div>
<div class="t" style="left:369.0px;top:484.69px;font-size:11px;color:#000;font-weight:normal;letter-spacing:-0.3px">21260001001</div>
<div class="t" style="left:578.5px;top:484.69px;font-size:11px;color:#000;font-weight:normal;letter-spacing:-0.3px">OF+38210</div>
<svg style="position:absolute;left:766px;top:483px" width="13" height="13" viewBox="0 0 13 13"><rect x="0.5" y="0.5" width="12" height="12" fill="#fff" stroke="#333" stroke-width="1"/><path d="M2.6 6.3 L5.3 8.8 L10.4 3.3" stroke="#4a4a4a" stroke-width="1.5" fill="none"/></svg>
<svg style="position:absolute;left:827px;top:483px" width="13" height="13" viewBox="0 0 13 13"><rect x="0.5" y="0.5" width="12" height="12" fill="#fff" stroke="#333" stroke-width="1"/><path d="M2.6 6.3 L5.3 8.8 L10.4 3.3" stroke="#4a4a4a" stroke-width="1.5" fill="none"/></svg>
<div class="t" style="left:861.0px;top:484.69px;font-size:11px;color:#000;font-weight:normal;letter-spacing:-0.3px">PL</div>
<div class="t" style="left:902.5px;top:484.69px;font-size:11px;color:#000;font-weight:normal;letter-spacing:-0.3px">LD</div>
<div class="t" style="left:959.5px;top:484.69px;font-size:11px;color:#000;font-weight:normal;letter-spacing:-0.3px">isia</div>
<div class="t" style="left:799.5px;width:600px;text-align:center;top:484.69px;font-size:11px;color:#000;font-weight:normal;letter-spacing:0.25px">14/09/2023</div>
<div class="t" style="left:1146.0px;top:484.69px;font-size:11px;color:#000;font-weight:normal;letter-spacing:-0.05px">10:42:10</div>
<div class="t" style="left:369.0px;top:500.69px;font-size:11px;color:#000;font-weight:normal;letter-spacing:-0.3px">21260001001</div>
<div class="t" style="left:578.5px;top:500.69px;font-size:11px;color:#000;font-weight:normal;letter-spacing:-0.3px">OF+38210</div>
<svg style="position:absolute;left:766px;top:499px" width="13" height="13" viewBox="0 0 13 13"><rect x="0.5" y="0.5" width="12" height="12" fill="#fff" stroke="#333" stroke-width="1"/><path d="M2.6 6.3 L5.3 8.8 L10.4 3.3" stroke="#4a4a4a" stroke-width="1.5" fill="none"/></svg>
<svg style="position:absolute;left:827px;top:499px" width="13" height="13" viewBox="0 0 13 13"><rect x="0.5" y="0.5" width="12" height="12" fill="#fff" stroke="#333" stroke-width="1"/><path d="M2.6 6.3 L5.3 8.8 L10.4 3.3" stroke="#4a4a4a" stroke-width="1.5" fill="none"/></svg>
<div class="t" style="left:861.0px;top:500.69px;font-size:11px;color:#000;font-weight:normal;letter-spacing:-0.3px">PL</div>
<div class="t" style="left:902.5px;top:500.69px;font-size:11px;color:#000;font-weight:normal;letter-spacing:-0.3px">LD</div>
<div class="t" style="left:959.5px;top:500.69px;font-size:11px;color:#000;font-weight:normal;letter-spacing:-0.3px">isia</div>
<div class="t" style="left:799.5px;width:600px;text-align:center;top:500.69px;font-size:11px;color:#000;font-weight:normal;letter-spacing:0.25px">14/09/2023</div>
<div class="t" style="left:1146.0px;top:500.69px;font-size:11px;color:#000;font-weight:normal;letter-spacing:-0.05px">10:39:14</div>
<div class="t" style="left:369.0px;top:516.69px;font-size:11px;color:#000;font-weight:normal;letter-spacing:-0.3px">21260001001</div>
<div class="t" style="left:578.5px;top:516.69px;font-size:11px;color:#000;font-weight:normal;letter-spacing:-0.3px">OF+38210</div>
<svg style="position:absolute;left:766px;top:515px" width="13" height="13" viewBox="0 0 13 13"><rect x="0.5" y="0.5" width="12" height="12" fill="#fff" stroke="#333" stroke-width="1"/><path d="M2.6 6.3 L5.3 8.8 L10.4 3.3" stroke="#4a4a4a" stroke-width="1.5" fill="none"/></svg>
<svg style="position:absolute;left:827px;top:515px" width="13" height="13" viewBox="0 0 13 13"><rect x="0.5" y="0.5" width="12" height="12" fill="#fff" stroke="#333" stroke-width="1"/><path d="M2.6 6.3 L5.3 8.8 L10.4 3.3" stroke="#4a4a4a" stroke-width="1.5" fill="none"/></svg>
<div class="t" style="left:861.0px;top:516.69px;font-size:11px;color:#000;font-weight:normal;letter-spacing:-0.3px">PL</div>
<div class="t" style="left:902.5px;top:516.69px;font-size:11px;color:#000;font-weight:normal;letter-spacing:-0.3px">LD</div>
<div class="t" style="left:959.5px;top:516.69px;font-size:11px;color:#000;font-weight:normal;letter-spacing:-0.3px">isia</div>
<div class="t" style="left:799.5px;width:600px;text-align:center;top:516.69px;font-size:11px;color:#000;font-weight:normal;letter-spacing:0.25px">14/09/2023</div>
<div class="t" style="left:1146.0px;top:516.69px;font-size:11px;color:#000;font-weight:normal;letter-spacing:-0.05px">10:38:24</div>
<div class="t" style="left:369.0px;top:532.69px;font-size:11px;color:#000;font-weight:normal;letter-spacing:-0.3px">21260001001</div>
<div class="t" style="left:578.5px;top:532.69px;font-size:11px;color:#000;font-weight:normal;letter-spacing:-0.3px">OF+38210</div>
<svg style="position:absolute;left:766px;top:531px" width="13" height="13" viewBox="0 0 13 13"><rect x="0.5" y="0.5" width="12" height="12" fill="#fff" stroke="#333" stroke-width="1"/><path d="M2.6 6.3 L5.3 8.8 L10.4 3.3" stroke="#4a4a4a" stroke-width="1.5" fill="none"/></svg>
<svg style="position:absolute;left:827px;top:531px" width="13" height="13" viewBox="0 0 13 13"><rect x="0.5" y="0.5" width="12" height="12" fill="#fff" stroke="#333" stroke-width="1"/><path d="M2.6 6.3 L5.3 8.8 L10.4 3.3" stroke="#4a4a4a" stroke-width="1.5" fill="none"/></svg>
<div class="t" style="left:861.0px;top:532.69px;font-size:11px;color:#000;font-weight:normal;letter-spacing:-0.3px">PL</div>
<div class="t" style="left:902.5px;top:532.69px;font-size:11px;color:#000;font-weight:normal;letter-spacing:-0.3px">LD</div>
<div class="t" style="left:959.5px;top:532.69px;font-size:11px;color:#000;font-weight:normal;letter-spacing:-0.3px">isia</div>
<div class="t" style="left:799.5px;width:600px;text-align:center;top:532.69px;font-size:11px;color:#000;font-weight:normal;letter-spacing:0.25px">14/09/2023</div>
<div class="t" style="left:1146.0px;top:532.69px;font-size:11px;color:#000;font-weight:normal;letter-spacing:-0.05px">10:36:13</div>
<div class="t" style="left:369.0px;top:548.69px;font-size:11px;color:#000;font-weight:normal;letter-spacing:-0.3px">21260001001</div>
<div class="t" style="left:578.5px;top:548.69px;font-size:11px;color:#000;font-weight:normal;letter-spacing:-0.3px">OF+38210</div>
<svg style="position:absolute;left:766px;top:547px" width="13" height="13" viewBox="0 0 13 13"><rect x="0.5" y="0.5" width="12" height="12" fill="#fff" stroke="#333" stroke-width="1"/><path d="M2.6 6.3 L5.3 8.8 L10.4 3.3" stroke="#4a4a4a" stroke-width="1.5" fill="none"/></svg>
<svg style="position:absolute;left:827px;top:547px" width="13" height="13" viewBox="0 0 13 13"><rect x="0.5" y="0.5" width="12" height="12" fill="#fff" stroke="#333" stroke-width="1"/><path d="M2.6 6.3 L5.3 8.8 L10.4 3.3" stroke="#4a4a4a" stroke-width="1.5" fill="none"/></svg>
<div class="t" style="left:861.0px;top:548.69px;font-size:11px;color:#000;font-weight:normal;letter-spacing:-0.3px">PL</div>
<div class="t" style="left:902.5px;top:548.69px;font-size:11px;color:#000;font-weight:normal;letter-spacing:-0.3px">LD</div>
<div class="t" style="left:959.5px;top:548.69px;font-size:11px;color:#000;font-weight:normal;letter-spacing:-0.3px">isia</div>
<div class="t" style="left:799.5px;width:600px;text-align:center;top:548.69px;font-size:11px;color:#000;font-weight:normal;letter-spacing:0.25px">14/09/2023</div>
<div class="t" style="left:1146.0px;top:548.69px;font-size:11px;color:#000;font-weight:normal;letter-spacing:-0.05px">10:33:12</div>
<div class="t" style="left:369.0px;top:564.69px;font-size:11px;color:#000;font-weight:normal;letter-spacing:-0.3px">21260001001</div>
<div class="t" style="left:578.5px;top:564.69px;font-size:11px;color:#000;font-weight:normal;letter-spacing:-0.3px">OF+38210</div>
<svg style="position:absolute;left:766px;top:563px" width="13" height="13" viewBox="0 0 13 13"><rect x="0.5" y="0.5" width="12" height="12" fill="#fff" stroke="#333" stroke-width="1"/><path d="M2.6 6.3 L5.3 8.8 L10.4 3.3" stroke="#4a4a4a" stroke-width="1.5" fill="none"/></svg>
<svg style="position:absolute;left:827px;top:563px" width="13" height="13" viewBox="0 0 13 13"><rect x="0.5" y="0.5" width="12" height="12" fill="#fff" stroke="#333" stroke-width="1"/><path d="M2.6 6.3 L5.3 8.8 L10.4 3.3" stroke="#4a4a4a" stroke-width="1.5" fill="none"/></svg>
<div class="t" style="left:861.0px;top:564.69px;font-size:11px;color:#000;font-weight:normal;letter-spacing:-0.3px">PL</div>
<div class="t" style="left:902.5px;top:564.69px;font-size:11px;color:#000;font-weight:normal;letter-spacing:-0.3px">LD</div>
<div class="t" style="left:959.5px;top:564.69px;font-size:11px;color:#000;font-weight:normal;letter-spacing:-0.3px">isia</div>
<div class="t" style="left:799.5px;width:600px;text-align:center;top:564.69px;font-size:11px;color:#000;font-weight:normal;letter-spacing:0.25px">14/09/2023</div>
<div class="t" style="left:1146.0px;top:564.69px;font-size:11px;color:#000;font-weight:normal;letter-spacing:-0.05px">10:30:11</div>
<div class="t" style="left:369.0px;top:580.69px;font-size:11px;color:#000;font-weight:normal;letter-spacing:-0.3px">21260001001</div>
<div class="t" style="left:578.5px;top:580.69px;font-size:11px;color:#000;font-weight:normal;letter-spacing:-0.3px">OF+38210</div>
<svg style="position:absolute;left:766px;top:579px" width="13" height="13" viewBox="0 0 13 13"><rect x="0.5" y="0.5" width="12" height="12" fill="#fff" stroke="#333" stroke-width="1"/><path d="M2.6 6.3 L5.3 8.8 L10.4 3.3" stroke="#4a4a4a" stroke-width="1.5" fill="none"/></svg>
<svg style="position:absolute;left:827px;top:579px" width="13" height="13" viewBox="0 0 13 13"><rect x="0.5" y="0.5" width="12" height="12" fill="#fff" stroke="#333" stroke-width="1"/><path d="M2.6 6.3 L5.3 8.8 L10.4 3.3" stroke="#4a4a4a" stroke-width="1.5" fill="none"/></svg>
<div class="t" style="left:861.0px;top:580.69px;font-size:11px;color:#000;font-weight:normal;letter-spacing:-0.3px">PL</div>
<div class="t" style="left:902.5px;top:580.69px;font-size:11px;color:#000;font-weight:normal;letter-spacing:-0.3px">LD</div>
<div class="t" style="left:959.5px;top:580.69px;font-size:11px;color:#000;font-weight:normal;letter-spacing:-0.3px">isia</div>
<div class="t" style="left:799.5px;width:600px;text-align:center;top:580.69px;font-size:11px;color:#000;font-weight:normal;letter-spacing:0.25px">14/09/2023</div>
<div class="t" style="left:1146.0px;top:580.69px;font-size:11px;color:#000;font-weight:normal;letter-spacing:-0.05px">10:27:14</div>
<div class="t" style="left:369.0px;top:596.69px;font-size:11px;color:#000;font-weight:normal;letter-spacing:-0.3px">21260001001</div>
<div class="t" style="left:578.5px;top:596.69px;font-size:11px;color:#000;font-weight:normal;letter-spacing:-0.3px">OF+38210</div>
<svg style="position:absolute;left:766px;top:595px" width="13" height="13" viewBox="0 0 13 13"><rect x="0.5" y="0.5" width="12" height="12" fill="#fff" stroke="#333" stroke-width="1"/><path d="M2.6 6.3 L5.3 8.8 L10.4 3.3" stroke="#4a4a4a" stroke-width="1.5" fill="none"/></svg>
<svg style="position:absolute;left:827px;top:595px" width="13" height="13" viewBox="0 0 13 13"><rect x="0.5" y="0.5" width="12" height="12" fill="#fff" stroke="#333" stroke-width="1"/><path d="M2.6 6.3 L5.3 8.8 L10.4 3.3" stroke="#4a4a4a" stroke-width="1.5" fill="none"/></svg>
<div class="t" style="left:861.0px;top:596.69px;font-size:11px;color:#000;font-weight:normal;letter-spacing:-0.3px">PL</div>
<div class="t" style="left:902.5px;top:596.69px;font-size:11px;color:#000;font-weight:normal;letter-spacing:-0.3px">LD</div>
<div class="t" style="left:959.5px;top:596.69px;font-size:11px;color:#000;font-weight:normal;letter-spacing:-0.3px">isia</div>
<div class="t" style="left:799.5px;width:600px;text-align:center;top:596.69px;font-size:11px;color:#000;font-weight:normal;letter-spacing:0.25px">14/09/2023</div>
<div class="t" style="left:1146.0px;top:596.69px;font-size:11px;color:#000;font-weight:normal;letter-spacing:-0.05px">10:24:13</div>
<div class="t" style="left:369.0px;top:612.69px;font-size:11px;color:#000;font-weight:normal;letter-spacing:-0.3px">21260001001</div>
<div class="t" style="left:578.5px;top:612.69px;font-size:11px;color:#000;font-weight:normal;letter-spacing:-0.3px">OF+38210</div>
<svg style="position:absolute;left:766px;top:611px" width="13" height="13" viewBox="0 0 13 13"><rect x="0.5" y="0.5" width="12" height="12" fill="#fff" stroke="#333" stroke-width="1"/><path d="M2.6 6.3 L5.3 8.8 L10.4 3.3" stroke="#4a4a4a" stroke-width="1.5" fill="none"/></svg>
<svg style="position:absolute;left:827px;top:611px" width="13" height="13" viewBox="0 0 13 13"><rect x="0.5" y="0.5" width="12" height="12" fill="#fff" stroke="#333" stroke-width="1"/><path d="M2.6 6.3 L5.3 8.8 L10.4 3.3" stroke="#4a4a4a" stroke-width="1.5" fill="none"/></svg>
<div class="t" style="left:861.0px;top:612.69px;font-size:11px;color:#000;font-weight:normal;letter-spacing:-0.3px">PL</div>
<div class="t" style="left:902.5px;top:612.69px;font-size:11px;color:#000;font-weight:normal;letter-spacing:-0.3px">LD</div>
<div class="t" style="left:959.5px;top:612.69px;font-size:11px;color:#000;font-weight:normal;letter-spacing:-0.3px">isia</div>
<div class="t" style="left:799.5px;width:600px;text-align:center;top:612.69px;font-size:11px;color:#000;font-weight:normal;letter-spacing:0.25px">14/09/2023</div>
<div class="t" style="left:1146.0px;top:612.69px;font-size:11px;color:#000;font-weight:normal;letter-spacing:-0.05px">10:21:12</div>
<div class="t" style="left:369.0px;top:628.69px;font-size:11px;color:#000;font-weight:normal;letter-spacing:-0.3px">21260001001</div>
<div class="t" style="left:578.5px;top:628.69px;font-size:11px;color:#000;font-weight:normal;letter-spacing:-0.3px">OF+38210</div>
<svg style="position:absolute;left:766px;top:627px" width="13" height="13" viewBox="0 0 13 13"><rect x="0.5" y="0.5" width="12" height="12" fill="#fff" stroke="#333" stroke-width="1"/><path d="M2.6 6.3 L5.3 8.8 L10.4 3.3" stroke="#4a4a4a" stroke-width="1.5" fill="none"/></svg>
<svg style="position:absolute;left:827px;top:627px" width="13" height="13" viewBox="0 0 13 13"><rect x="0.5" y="0.5" width="12" height="12" fill="#fff" stroke="#333" stroke-width="1"/><path d="M2.6 6.3 L5.3 8.8 L10.4 3.3" stroke="#4a4a4a" stroke-width="1.5" fill="none"/></svg>
<div class="t" style="left:861.0px;top:628.69px;font-size:11px;color:#000;font-weight:normal;letter-spacing:-0.3px">PL</div>
<div class="t" style="left:902.5px;top:628.69px;font-size:11px;color:#000;font-weight:normal;letter-spacing:-0.3px">LD</div>
<div class="t" style="left:959.5px;top:628.69px;font-size:11px;color:#000;font-weight:normal;letter-spacing:-0.3px">isia</div>
<div class="t" style="left:799.5px;width:600px;text-align:center;top:628.69px;font-size:11px;color:#000;font-weight:normal;letter-spacing:0.25px">14/09/2023</div>
<div class="t" style="left:1146.0px;top:628.69px;font-size:11px;color:#000;font-weight:normal;letter-spacing:-0.05px">10:18:12</div>
<div class="t" style="left:369.0px;top:644.69px;font-size:11px;color:#000;font-weight:normal;letter-spacing:-0.3px">21260001001</div>
<div class="t" style="left:578.5px;top:644.69px;font-size:11px;color:#000;font-weight:normal;letter-spacing:-0.3px">OF+38210</div>
<svg style="position:absolute;left:766px;top:643px" width="13" height="13" viewBox="0 0 13 13"><rect x="0.5" y="0.5" width="12" height="12" fill="#fff" stroke="#333" stroke-width="1"/><path d="M2.6 6.3 L5.3 8.8 L10.4 3.3" stroke="#4a4a4a" stroke-width="1.5" fill="none"/></svg>
<svg style="position:absolute;left:827px;top:643px" width="13" height="13" viewBox="0 0 13 13"><rect x="0.5" y="0.5" width="12" height="12" fill="#fff" stroke="#333" stroke-width="1"/><path d="M2.6 6.3 L5.3 8.8 L10.4 3.3" stroke="#4a4a4a" stroke-width="1.5" fill="none"/></svg>
<div class="t" style="left:861.0px;top:644.69px;font-size:11px;color:#000;font-weight:normal;letter-spacing:-0.3px">PL</div>
<div class="t" style="left:902.5px;top:644.69px;font-size:11px;color:#000;font-weight:normal;letter-spacing:-0.3px">LD</div>
<div class="t" style="left:959.5px;top:644.69px;font-size:11px;color:#000;font-weight:normal;letter-spacing:-0.3px">isia</div>
<div class="t" style="left:799.5px;width:600px;text-align:center;top:644.69px;font-size:11px;color:#000;font-weight:normal;letter-spacing:0.25px">14/09/2023</div>
<div class="t" style="left:1146.0px;top:644.69px;font-size:11px;color:#000;font-weight:normal;letter-spacing:-0.05px">10:15:11</div>
<div class="t" style="left:369.0px;top:660.69px;font-size:11px;color:#000;font-weight:normal;letter-spacing:-0.3px">21260001001</div>
<div class="t" style="left:578.5px;top:660.69px;font-size:11px;color:#000;font-weight:normal;letter-spacing:-0.3px">OF+38210</div>
<svg style="position:absolute;left:766px;top:659px" width="13" height="13" viewBox="0 0 13 13"><rect x="0.5" y="0.5" width="12" height="12" fill="#fff" stroke="#333" stroke-width="1"/><path d="M2.6 6.3 L5.3 8.8 L10.4 3.3" stroke="#4a4a4a" stroke-width="1.5" fill="none"/></svg>
<svg style="position:absolute;left:827px;top:659px" width="13" height="13" viewBox="0 0 13 13"><rect x="0.5" y="0.5" width="12" height="12" fill="#fff" stroke="#333" stroke-width="1"/><path d="M2.6 6.3 L5.3 8.8 L10.4 3.3" stroke="#4a4a4a" stroke-width="1.5" fill="none"/></svg>
<div class="t" style="left:861.0px;top:660.69px;font-size:11px;color:#000;font-weight:normal;letter-spacing:-0.3px">PL</div>
<div class="t" style="left:902.5px;top:660.69px;font-size:11px;color:#000;font-weight:normal;letter-spacing:-0.3px">LD</div>
<div class="t" style="left:959.5px;top:660.69px;font-size:11px;color:#000;font-weight:normal;letter-spacing:-0.3px">isia</div>
<div class="t" style="left:799.5px;width:600px;text-align:center;top:660.69px;font-size:11px;color:#000;font-weight:normal;letter-spacing:0.25px">14/09/2023</div>
<div class="t" style="left:1146.0px;top:660.69px;font-size:11px;color:#000;font-weight:normal;letter-spacing:-0.05px">10:12:14</div>
<div class="t" style="left:369.0px;top:676.69px;font-size:11px;color:#000;font-weight:normal;letter-spacing:-0.3px">21260001001</div>
<div class="t" style="left:578.5px;top:676.69px;font-size:11px;color:#000;font-weight:normal;letter-spacing:-0.3px">OF+38210</div>
<svg style="position:absolute;left:766px;top:675px" width="13" height="13" viewBox="0 0 13 13"><rect x="0.5" y="0.5" width="12" height="12" fill="#fff" stroke="#333" stroke-width="1"/><path d="M2.6 6.3 L5.3 8.8 L10.4 3.3" stroke="#4a4a4a" stroke-width="1.5" fill="none"/></svg>
<svg style="position:absolute;left:827px;top:675px" width="13" height="13" viewBox="0 0 13 13"><rect x="0.5" y="0.5" width="12" height="12" fill="#fff" stroke="#333" stroke-width="1"/><path d="M2.6 6.3 L5.3 8.8 L10.4 3.3" stroke="#4a4a4a" stroke-width="1.5" fill="none"/></svg>
<div class="t" style="left:861.0px;top:676.69px;font-size:11px;color:#000;font-weight:normal;letter-spacing:-0.3px">PL</div>
<div class="t" style="left:902.5px;top:676.69px;font-size:11px;color:#000;font-weight:normal;letter-spacing:-0.3px">LD</div>
<div class="t" style="left:959.5px;top:676.69px;font-size:11px;color:#000;font-weight:normal;letter-spacing:-0.3px">isia</div>
<div class="t" style="left:799.5px;width:600px;text-align:center;top:676.69px;font-size:11px;color:#000;font-weight:normal;letter-spacing:0.25px">14/09/2023</div>
<div class="t" style="left:1146.0px;top:676.69px;font-size:11px;color:#000;font-weight:normal;letter-spacing:-0.05px">10:09:13</div>
<div class="t" style="left:369.0px;top:692.69px;font-size:11px;color:#000;font-weight:normal;letter-spacing:-0.3px">21260001001</div>
<div class="t" style="left:578.5px;top:692.69px;font-size:11px;color:#000;font-weight:normal;letter-spacing:-0.3px">OF+38210</div>
<svg style="position:absolute;left:766px;top:691px" width="13" height="13" viewBox="0 0 13 13"><rect x="0.5" y="0.5" width="12" height="12" fill="#fff" stroke="#333" stroke-width="1"/><path d="M2.6 6.3 L5.3 8.8 L10.4 3.3" stroke="#4a4a4a" stroke-width="1.5" fill="none"/></svg>
<svg style="position:absolute;left:827px;top:691px" width="13" height="13" viewBox="0 0 13 13"><rect x="0.5" y="0.5" width="12" height="12" fill="#fff" stroke="#333" stroke-width="1"/><path d="M2.6 6.3 L5.3 8.8 L10.4 3.3" stroke="#4a4a4a" stroke-width="1.5" fill="none"/></svg>
<div class="t" style="left:861.0px;top:692.69px;font-size:11px;color:#000;font-weight:normal;letter-spacing:-0.3px">PL</div>
<div class="t" style="left:902.5px;top:692.69px;font-size:11px;color:#000;font-weight:normal;letter-spacing:-0.3px">LD</div>
<div class="t" style="left:959.5px;top:692.69px;font-size:11px;color:#000;font-weight:normal;letter-spacing:-0.3px">isia</div>
<div class="t" style="left:799.5px;width:600px;text-align:center;top:692.69px;font-size:11px;color:#000;font-weight:normal;letter-spacing:0.25px">14/09/2023</div>
<div class="t" style="left:1146.0px;top:692.69px;font-size:11px;color:#000;font-weight:normal;letter-spacing:-0.05px">10:06:12</div>
<div class="t" style="left:369.0px;top:708.69px;font-size:11px;color:#000;font-weight:normal;letter-spacing:-0.3px">21260001001</div>
<div class="t" style="left:578.5px;top:708.69px;font-size:11px;color:#000;font-weight:normal;letter-spacing:-0.3px">OF+38210</div>
<svg style="position:absolute;left:766px;top:707px" width="13" height="13" viewBox="0 0 13 13"><rect x="0.5" y="0.5" width="12" height="12" fill="#fff" stroke="#333" stroke-width="1"/><path d="M2.6 6.3 L5.3 8.8 L10.4 3.3" stroke="#4a4a4a" stroke-width="1.5" fill="none"/></svg>
<svg style="position:absolute;left:827px;top:707px" width="13" height="13" viewBox="0 0 13 13"><rect x="0.5" y="0.5" width="12" height="12" fill="#fff" stroke="#333" stroke-width="1"/><path d="M2.6 6.3 L5.3 8.8 L10.4 3.3" stroke="#4a4a4a" stroke-width="1.5" fill="none"/></svg>
<div class="t" style="left:861.0px;top:708.69px;font-size:11px;color:#000;font-weight:normal;letter-spacing:-0.3px">PL</div>
<div class="t" style="left:902.5px;top:708.69px;font-size:11px;color:#000;font-weight:normal;letter-spacing:-0.3px">LD</div>
<div class="t" style="left:959.5px;top:708.69px;font-size:11px;color:#000;font-weight:normal;letter-spacing:-0.3px">isia</div>
<div class="t" style="left:799.5px;width:600px;text-align:center;top:708.69px;font-size:11px;color:#000;font-weight:normal;letter-spacing:0.25px">14/09/2023</div>
<div class="t" style="left:1146.0px;top:708.69px;font-size:11px;color:#000;font-weight:normal;letter-spacing:-0.05px">10:03:11</div>
<div class="t" style="left:369.0px;top:724.69px;font-size:11px;color:#000;font-weight:normal;letter-spacing:-0.3px">21260001001</div>
<div class="t" style="left:578.5px;top:724.69px;font-size:11px;color:#000;font-weight:normal;letter-spacing:-0.3px">OF+38210</div>
<svg style="position:absolute;left:766px;top:723px" width="13" height="13" viewBox="0 0 13 13"><rect x="0.5" y="0.5" width="12" height="12" fill="#fff" stroke="#333" stroke-width="1"/><path d="M2.6 6.3 L5.3 8.8 L10.4 3.3" stroke="#4a4a4a" stroke-width="1.5" fill="none"/></svg>
<svg style="position:absolute;left:827px;top:723px" width="13" height="13" viewBox="0 0 13 13"><rect x="0.5" y="0.5" width="12" height="12" fill="#fff" stroke="#333" stroke-width="1"/><path d="M2.6 6.3 L5.3 8.8 L10.4 3.3" stroke="#4a4a4a" stroke-width="1.5" fill="none"/></svg>
<div class="t" style="left:861.0px;top:724.69px;font-size:11px;color:#000;font-weight:normal;letter-spacing:-0.3px">PL</div>
<div class="t" style="left:902.5px;top:724.69px;font-size:11px;color:#000;font-weight:normal;letter-spacing:-0.3px">LD</div>
<div class="t" style="left:959.5px;top:724.69px;font-size:11px;color:#000;font-weight:normal;letter-spacing:-0.3px">isia</div>
<div class="t" style="left:799.5px;width:600px;text-align:center;top:724.69px;font-size:11px;color:#000;font-weight:normal;letter-spacing:0.25px">14/09/2023</div>
<div class="t" style="left:1146.0px;top:724.69px;font-size:11px;color:#000;font-weight:normal;letter-spacing:-0.05px">10:00:15</div>
<div class="t" style="left:369.0px;top:740.69px;font-size:11px;color:#000;font-weight:normal;letter-spacing:-0.3px">21260001001</div>
<div class="t" style="left:578.5px;top:740.69px;font-size:11px;color:#000;font-weight:normal;letter-spacing:-0.3px">OF+38210</div>
<svg style="position:absolute;left:766px;top:739px" width="13" height="13" viewBox="0 0 13 13"><rect x="0.5" y="0.5" width="12" height="12" fill="#fff" stroke="#333" stroke-width="1"/><path d="M2.6 6.3 L5.3 8.8 L10.4 3.3" stroke="#4a4a4a" stroke-width="1.5" fill="none"/></svg>
<svg style="position:absolute;left:827px;top:739px" width="13" height="13" viewBox="0 0 13 13"><rect x="0.5" y="0.5" width="12" height="12" fill="#fff" stroke="#333" stroke-width="1"/><path d="M2.6 6.3 L5.3 8.8 L10.4 3.3" stroke="#4a4a4a" stroke-width="1.5" fill="none"/></svg>
<div class="t" style="left:861.0px;top:740.69px;font-size:11px;color:#000;font-weight:normal;letter-spacing:-0.3px">PL</div>
<div class="t" style="left:902.5px;top:740.69px;font-size:11px;color:#000;font-weight:normal;letter-spacing:-0.3px">LD</div>
<div class="t" style="left:959.5px;top:740.69px;font-size:11px;color:#000;font-weight:normal;letter-spacing:-0.3px">isia</div>
<div class="t" style="left:799.5px;width:600px;text-align:center;top:740.69px;font-size:11px;color:#000;font-weight:normal;letter-spacing:0.25px">14/09/2023</div>
<div class="t" style="left:1146.0px;top:740.69px;font-size:11px;color:#000;font-weight:normal;letter-spacing:-0.05px">09:57:14</div>
<div class="t" style="left:369.0px;top:756.69px;font-size:11px;color:#000;font-weight:normal;letter-spacing:-0.3px">21260001001</div>
<div class="t" style="left:578.5px;top:756.69px;font-size:11px;color:#000;font-weight:normal;letter-spacing:-0.3px">OF+38210</div>
<svg style="position:absolute;left:766px;top:755px" width="13" height="13" viewBox="0 0 13 13"><rect x="0.5" y="0.5" width="12" height="12" fill="#fff" stroke="#333" stroke-width="1"/><path d="M2.6 6.3 L5.3 8.8 L10.4 3.3" stroke="#4a4a4a" stroke-width="1.5" fill="none"/></svg>
<svg style="position:absolute;left:827px;top:755px" width="13" height="13" viewBox="0 0 13 13"><rect x="0.5" y="0.5" width="12" height="12" fill="#fff" stroke="#333" stroke-width="1"/><path d="M2.6 6.3 L5.3 8.8 L10.4 3.3" stroke="#4a4a4a" stroke-width="1.5" fill="none"/></svg>
<div class="t" style="left:861.0px;top:756.69px;font-size:11px;color:#000;font-weight:normal;letter-spacing:-0.3px">PL</div>
<div class="t" style="left:902.5px;top:756.69px;font-size:11px;color:#000;font-weight:normal;letter-spacing:-0.3px">LD</div>
<div class="t" style="left:959.5px;top:756.69px;font-size:11px;color:#000;font-weight:normal;letter-spacing:-0.3px">isia</div>
<div class="t" style="left:799.5px;width:600px;text-align:center;top:756.69px;font-size:11px;color:#000;font-weight:normal;letter-spacing:0.25px">14/09/2023</div>
<div class="t" style="left:1146.0px;top:756.69px;font-size:11px;color:#000;font-weight:normal;letter-spacing:-0.05px">09:54:13</div>
<div class="t" style="left:369.0px;top:772.69px;font-size:11px;color:#000;font-weight:normal;letter-spacing:-0.3px">21260001001</div>
<div class="t" style="left:578.5px;top:772.69px;font-size:11px;color:#000;font-weight:normal;letter-spacing:-0.3px">OF+38210</div>
<svg style="position:absolute;left:766px;top:771px" width="13" height="13" viewBox="0 0 13 13"><rect x="0.5" y="0.5" width="12" height="12" fill="#fff" stroke="#333" stroke-width="1"/><path d="M2.6 6.3 L5.3 8.8 L10.4 3.3" stroke="#4a4a4a" stroke-width="1.5" fill="none"/></svg>
<svg style="position:absolute;left:827px;top:771px" width="13" height="13" viewBox="0 0 13 13"><rect x="0.5" y="0.5" width="12" height="12" fill="#fff" stroke="#333" stroke-width="1"/><path d="M2.6 6.3 L5.3 8.8 L10.4 3.3" stroke="#4a4a4a" stroke-width="1.5" fill="none"/></svg>
<div class="t" style="left:861.0px;top:772.69px;font-size:11px;color:#000;font-weight:normal;letter-spacing:-0.3px">PL</div>
<div class="t" style="left:902.5px;top:772.69px;font-size:11px;color:#000;font-weight:normal;letter-spacing:-0.3px">LD</div>
<div class="t" style="left:959.5px;top:772.69px;font-size:11px;color:#000;font-weight:normal;letter-spacing:-0.3px">isia</div>
<div class="t" style="left:799.5px;width:600px;text-align:center;top:772.69px;font-size:11px;color:#000;font-weight:normal;letter-spacing:0.25px">14/09/2023</div>
<div class="t" style="left:1146.0px;top:772.69px;font-size:11px;color:#000;font-weight:normal;letter-spacing:-0.05px">09:51:12</div>
</body></html>
